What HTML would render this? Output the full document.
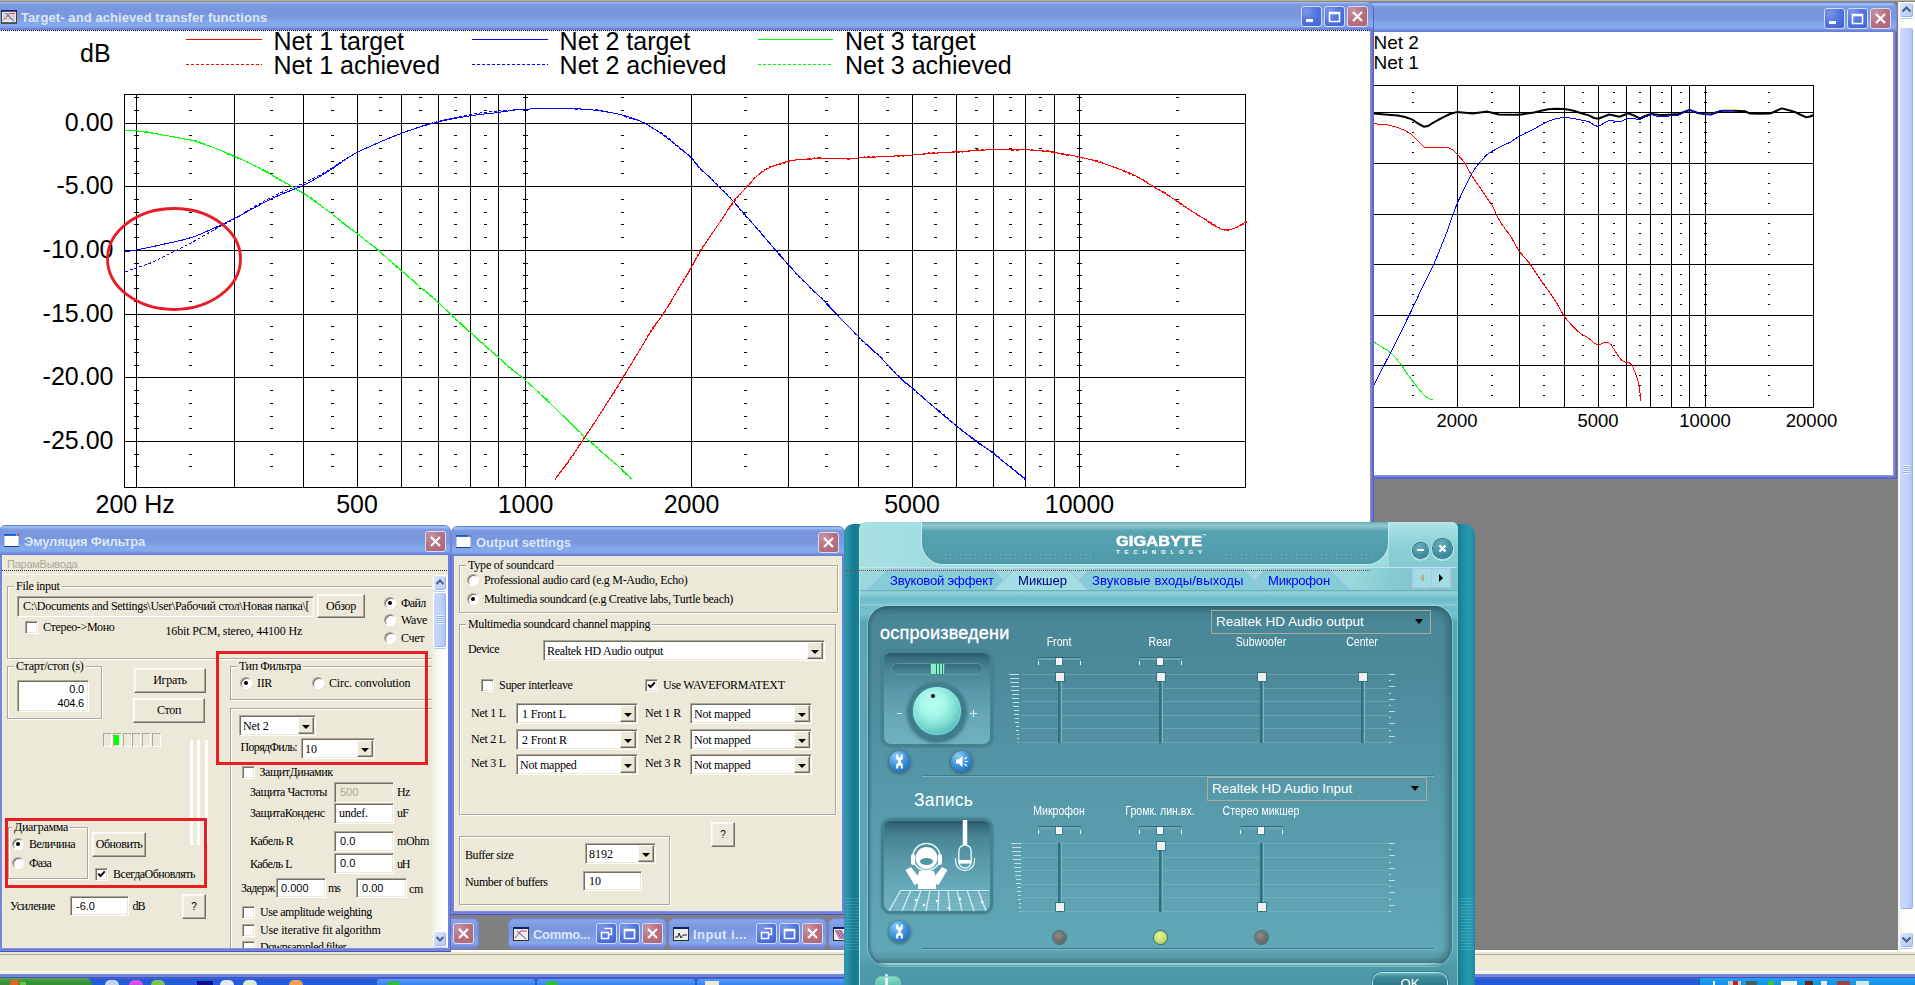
<!DOCTYPE html>
<html lang="ru">
<head>
<meta charset="utf-8">
<title>Target- and achieved transfer functions</title>
<style>
*{box-sizing:border-box;margin:0;padding:0}
html,body{width:1915px;height:985px;overflow:hidden;background:#808080}
body{position:relative;font-family:"Liberation Sans",sans-serif;font-size:11px;color:#000;line-height:1}
.a{position:absolute}
.ser{font-family:"Liberation Serif",serif;font-size:12px;white-space:nowrap;line-height:13px}
.san{font-family:"Liberation Sans",sans-serif;font-size:11px;white-space:nowrap;line-height:13px}
.q{font-size:10px}
/* window frames */
.win{position:absolute;background:#fff;border:1px solid #5560c4;border-top:0;box-shadow:inset 0 0 0 1px #6472d1,inset 0 0 0 2px #7180da,inset 0 0 0 3px #8696e4}
.tb{position:absolute;left:0;height:30px;border-radius:7px 7px 0 0;
 background:linear-gradient(180deg,#5f82e0 0,#5f82e0 1px,#9db9ee 1px,#9db9ee 3px,#8aa8ea 3.5px,#7f9ee4 4.5px,#7b98e0 5.5px,#7a96de 7px,#7a96de 17px,#7fa0e5 19.5px,#83a9ea 22px,#83a9ea 25.5px,#80a2e7 26.5px,#7b94e1 27.5px,#7086da 28.5px,#6c80d8 29.5px);
 box-shadow:inset 1px 0 0 #7887dc,inset -1px 0 0 #7887dc}
.tt{position:absolute;font-family:"Liberation Sans",sans-serif;font-weight:bold;font-size:13px;line-height:15px;color:#dce6f9;white-space:nowrap}
.cb{position:absolute;width:21px;height:21px;border-radius:3px;border:1px solid #d5dcf5;
 background:radial-gradient(circle at 25% 20%,#7c97ea 0,#5677e2 45%,#4a6ddc 70%,#3f62d2 100%)}
.cb.x{background:radial-gradient(circle at 25% 20%,#c692a8 0,#b8707e 50%,#b06472 100%)}
.cb svg{position:absolute;left:0;top:0;width:19px;height:19px}
/* classic controls */
.btn{position:absolute;background:#ece9d8;border:1px solid;border-color:#fff #716f64 #716f64 #fff;box-shadow:inset -1px -1px 0 #aca899,inset 1px 1px 0 #f6f5ee;text-align:center}
.fld{position:absolute;background:#fff;border:1px solid;border-color:#aca899 #fff #fff #aca899;box-shadow:inset 1px 1px 0 #716f64,inset -1px -1px 0 #ece9d8}
.grp{position:absolute;border:1px solid #aca899;box-shadow:1px 1px 0 #fff,inset 1px 1px 0 #fff}
.gl{position:absolute;background:#ece9d8;padding:0 2px}
.chk{position:absolute;width:13px;height:13px;background:#fff;border:1px solid;border-color:#aca899 #fff #fff #aca899;box-shadow:inset 1px 1px 0 #716f64,inset -1px -1px 0 #ece9d8}
.rad{position:absolute;width:12px;height:12px;border-radius:50%;background:#fff;border:1px solid;border-color:#aca899 #fff #fff #aca899;box-shadow:inset 1px 1px 0 #716f64}
.rad.on::after{content:"";position:absolute;left:3px;top:3px;width:4px;height:4px;border-radius:50%;background:#000}
.dd{position:absolute;right:1px;top:1px;bottom:1px;width:16px;background:#ece9d8;border:1px solid;border-color:#fff #716f64 #716f64 #fff;box-shadow:inset -1px -1px 0 #aca899}
.dd::after{content:"";position:absolute;left:3px;top:7px;border:4px solid transparent;border-top-color:#000;border-bottom:0}
</style>
</head>
<body>

<!-- MDI client top edge -->
<div class="a" style="left:0;top:0;width:1915px;height:1px;background:#b4b1a0"></div>
<div class="a" style="left:0;top:1px;width:1915px;height:1px;background:#8d8a7b"></div>

<!-- second chart window (Common mode / summed response) -->
<div class="win" style="left:1360px;top:2px;width:537px;height:477px;border-radius:8px 8px 0 0">
 <div class="tb" style="left:-1px;top:0;width:537px;height:30px"></div>
</div>
<svg class="a" style="left:1374px;top:32px" width="519" height="443" viewBox="1374 32 519 443" font-family="'Liberation Sans',sans-serif" font-size="18.5" fill="#000">
<g shape-rendering="crispEdges" stroke="#000" stroke-width="1" fill="none"><path d="M1373.5 85.5H1813.5V407.5H1373.5M1373.5 112.5H1813.5M1373.5 163.5H1813.5M1373.5 214.5H1813.5M1373.5 264.5H1813.5M1373.5 315.5H1813.5M1373.5 365.5H1813.5M1457.5 85.5V407.5M1519.5 85.5V407.5M1564.5 85.5V407.5M1598.5 85.5V407.5M1626.5 85.5V407.5M1650.5 85.5V407.5M1671.5 85.5V407.5M1689.5 85.5V407.5M1705.5 85.5V407.5"/><path d="M1411.5 92.5h2M1490.5 92.5h2M1542.5 92.5h2M1581.5 92.5h2M1612.5 92.5h2M1638.5 92.5h2M1660.5 92.5h2M1679.5 92.5h2M1767.5 92.5h2M1704.0 92.5h3M1411.5 102.5h2M1490.5 102.5h2M1542.5 102.5h2M1581.5 102.5h2M1612.5 102.5h2M1638.5 102.5h2M1660.5 102.5h2M1679.5 102.5h2M1767.5 102.5h2M1704.0 102.5h3M1411.5 122.5h2M1490.5 122.5h2M1542.5 122.5h2M1581.5 122.5h2M1612.5 122.5h2M1638.5 122.5h2M1660.5 122.5h2M1679.5 122.5h2M1767.5 122.5h2M1704.0 122.5h3M1411.5 132.5h2M1490.5 132.5h2M1542.5 132.5h2M1581.5 132.5h2M1612.5 132.5h2M1638.5 132.5h2M1660.5 132.5h2M1679.5 132.5h2M1767.5 132.5h2M1704.0 132.5h3M1411.5 142.5h2M1490.5 142.5h2M1542.5 142.5h2M1581.5 142.5h2M1612.5 142.5h2M1638.5 142.5h2M1660.5 142.5h2M1679.5 142.5h2M1767.5 142.5h2M1704.0 142.5h3M1411.5 152.5h2M1490.5 152.5h2M1542.5 152.5h2M1581.5 152.5h2M1612.5 152.5h2M1638.5 152.5h2M1660.5 152.5h2M1679.5 152.5h2M1767.5 152.5h2M1704.0 152.5h3M1411.5 173.5h2M1490.5 173.5h2M1542.5 173.5h2M1581.5 173.5h2M1612.5 173.5h2M1638.5 173.5h2M1660.5 173.5h2M1679.5 173.5h2M1767.5 173.5h2M1704.0 173.5h3M1411.5 183.5h2M1490.5 183.5h2M1542.5 183.5h2M1581.5 183.5h2M1612.5 183.5h2M1638.5 183.5h2M1660.5 183.5h2M1679.5 183.5h2M1767.5 183.5h2M1704.0 183.5h3M1411.5 193.5h2M1490.5 193.5h2M1542.5 193.5h2M1581.5 193.5h2M1612.5 193.5h2M1638.5 193.5h2M1660.5 193.5h2M1679.5 193.5h2M1767.5 193.5h2M1704.0 193.5h3M1411.5 203.5h2M1490.5 203.5h2M1542.5 203.5h2M1581.5 203.5h2M1612.5 203.5h2M1638.5 203.5h2M1660.5 203.5h2M1679.5 203.5h2M1767.5 203.5h2M1704.0 203.5h3M1411.5 223.5h2M1490.5 223.5h2M1542.5 223.5h2M1581.5 223.5h2M1612.5 223.5h2M1638.5 223.5h2M1660.5 223.5h2M1679.5 223.5h2M1767.5 223.5h2M1704.0 223.5h3M1411.5 233.5h2M1490.5 233.5h2M1542.5 233.5h2M1581.5 233.5h2M1612.5 233.5h2M1638.5 233.5h2M1660.5 233.5h2M1679.5 233.5h2M1767.5 233.5h2M1704.0 233.5h3M1411.5 244.5h2M1490.5 244.5h2M1542.5 244.5h2M1581.5 244.5h2M1612.5 244.5h2M1638.5 244.5h2M1660.5 244.5h2M1679.5 244.5h2M1767.5 244.5h2M1704.0 244.5h3M1411.5 254.5h2M1490.5 254.5h2M1542.5 254.5h2M1581.5 254.5h2M1612.5 254.5h2M1638.5 254.5h2M1660.5 254.5h2M1679.5 254.5h2M1767.5 254.5h2M1704.0 254.5h3M1411.5 274.5h2M1490.5 274.5h2M1542.5 274.5h2M1581.5 274.5h2M1612.5 274.5h2M1638.5 274.5h2M1660.5 274.5h2M1679.5 274.5h2M1767.5 274.5h2M1704.0 274.5h3M1411.5 284.5h2M1490.5 284.5h2M1542.5 284.5h2M1581.5 284.5h2M1612.5 284.5h2M1638.5 284.5h2M1660.5 284.5h2M1679.5 284.5h2M1767.5 284.5h2M1704.0 284.5h3M1411.5 294.5h2M1490.5 294.5h2M1542.5 294.5h2M1581.5 294.5h2M1612.5 294.5h2M1638.5 294.5h2M1660.5 294.5h2M1679.5 294.5h2M1767.5 294.5h2M1704.0 294.5h3M1411.5 304.5h2M1490.5 304.5h2M1542.5 304.5h2M1581.5 304.5h2M1612.5 304.5h2M1638.5 304.5h2M1660.5 304.5h2M1679.5 304.5h2M1767.5 304.5h2M1704.0 304.5h3M1411.5 325.5h2M1490.5 325.5h2M1542.5 325.5h2M1581.5 325.5h2M1612.5 325.5h2M1638.5 325.5h2M1660.5 325.5h2M1679.5 325.5h2M1767.5 325.5h2M1704.0 325.5h3M1411.5 335.5h2M1490.5 335.5h2M1542.5 335.5h2M1581.5 335.5h2M1612.5 335.5h2M1638.5 335.5h2M1660.5 335.5h2M1679.5 335.5h2M1767.5 335.5h2M1704.0 335.5h3M1411.5 345.5h2M1490.5 345.5h2M1542.5 345.5h2M1581.5 345.5h2M1612.5 345.5h2M1638.5 345.5h2M1660.5 345.5h2M1679.5 345.5h2M1767.5 345.5h2M1704.0 345.5h3M1411.5 355.5h2M1490.5 355.5h2M1542.5 355.5h2M1581.5 355.5h2M1612.5 355.5h2M1638.5 355.5h2M1660.5 355.5h2M1679.5 355.5h2M1767.5 355.5h2M1704.0 355.5h3M1411.5 375.5h2M1490.5 375.5h2M1542.5 375.5h2M1581.5 375.5h2M1612.5 375.5h2M1638.5 375.5h2M1660.5 375.5h2M1679.5 375.5h2M1767.5 375.5h2M1704.0 375.5h3M1411.5 385.5h2M1490.5 385.5h2M1542.5 385.5h2M1581.5 385.5h2M1612.5 385.5h2M1638.5 385.5h2M1660.5 385.5h2M1679.5 385.5h2M1767.5 385.5h2M1704.0 385.5h3M1411.5 395.5h2M1490.5 395.5h2M1542.5 395.5h2M1581.5 395.5h2M1612.5 395.5h2M1638.5 395.5h2M1660.5 395.5h2M1679.5 395.5h2M1767.5 395.5h2M1704.0 395.5h3"/></g>
<polyline points="1374,113.6 1385,114.5 1397.7,115.4 1405,117 1412,119.4 1418,123.5 1423.8,126.7 1428,126 1432.5,123.2 1438,120 1444,116.8 1450,114 1457.4,111.9 1465,112.8 1473,113.6 1480,112.5 1487.5,111.6 1493,113 1499,114.5 1510,114.8 1519.4,114.8 1527,113.5 1534,112.5 1541,110.8 1548.4,109.3 1556,108.8 1564.3,109 1569,109.8 1574.5,111 1582,113.5 1589,115.4 1594,118 1598.3,118.8 1604,116.5 1609.3,114.5 1614,115.5 1619.4,116.8 1624,115 1628,113.3 1634,115.5 1639.7,118.3 1645,116 1651.3,113.9 1658,114.8 1664.3,115 1672,114.5 1678.8,113.9 1684,112 1689.6,110 1694,111.5 1697.7,113 1704,114 1710.7,114.5 1716,112.5 1722.3,110.7 1734,110.8 1745.5,111.3 1749.9,113.6 1760,113.8 1770,113.6 1776,111 1781.7,108.4 1788,110 1794.8,111.9 1800,114.5 1806.4,117.4 1810,116.5 1813.6,115" fill="none" stroke="#000" stroke-width="2" stroke-linejoin="round"/>
<polyline points="1374,123.8 1386,124.6 1397.7,127.5 1405,130.5 1412,134.8 1418,141 1424.3,147.2 1435,147.2 1447,147.2 1452.8,150 1458,155 1464.3,162.3 1471.6,175.4 1476,182 1481.7,189.9 1487,198 1493.3,207.2 1497,216 1502,224.6 1506,230 1510.7,236.2 1515,244 1519.4,251.6 1524,257 1529.6,263.2 1536,273 1542.6,283 1550,293 1557,303.6 1564.3,316.7 1572,325.5 1580.3,333.5 1585,336 1589,338.4 1594,343 1598.3,345 1603,343 1607.8,342.2 1611,344.5 1613.6,348.6 1617,354 1620.9,359.6 1625,362 1629.6,363 1633,367 1635.4,373.2 1638,381 1639.7,389 1640.6,400.7" fill="none" stroke="#ff0000" stroke-width="1" shape-rendering="crispEdges"/>
<polyline points="1374,342 1381,346.5 1389,351.4 1395,357 1400.6,364 1406,372 1412,380.4 1418,388 1423.8,395 1428,398 1432.5,400" fill="none" stroke="#00ff00" stroke-width="1" shape-rendering="crispEdges"/>
<polyline points="1374,384.8 1381,371 1389,355.8 1400,334 1412,309.4 1422,288 1432.5,267.4 1439.7,250 1447,231.9 1452,217 1457.4,203 1464,189 1471.6,174 1476,167 1481.7,160.3 1486,155.5 1490.4,152.2 1500,147 1510.7,142 1515,139 1519.4,136.2 1526,132.8 1534,129 1541,125 1548.4,121.2 1556,118.6 1564.3,117.4 1569,117.8 1574.5,118.8 1582,120.2 1589,121.7 1594,125 1598.3,126.7 1604,123 1609.3,120.3 1614,121 1619.4,122 1624,120 1628,118.3 1634,118.6 1639.7,119.7 1645,117 1651.3,114.5 1658,116.5 1664.3,116.8 1672,115.5 1678.8,115 1684,112.5 1689.6,110 1694,111.5 1697.7,113 1704,114 1710.7,114 1716,112 1722.3,110 1734,110" fill="none" stroke="#0000ff" stroke-width="1" shape-rendering="crispEdges"/>
<text x="1373.5" y="48.5" font-size="19">Net 2</text>
<text x="1373.5" y="68.5" font-size="19">Net 1</text>
<text x="1457" y="427" text-anchor="middle">2000</text>
<text x="1598" y="427" text-anchor="middle">5000</text>
<text x="1705" y="427" text-anchor="middle">10000</text>
<text x="1811.5" y="427" text-anchor="middle">20000</text>
</svg>
<div class="cb" style="left:1824px;top:8px"><svg viewBox="0 0 19 19"><rect x="4" y="12" width="7" height="3" fill="#fff"/></svg></div>
<div class="cb" style="left:1847px;top:8px"><svg viewBox="0 0 19 19"><path d="M4.5 5.5h10v9h-10z M4.5 6.5h10" fill="none" stroke="#fff" stroke-width="1.6"/></svg></div>
<div class="cb x" style="left:1870px;top:8px"><svg viewBox="0 0 19 19"><path d="M5 5l9 9M14 5l-9 9" stroke="#fff" stroke-width="2.2" fill="none"/></svg></div>

<!-- main chart window -->
<div class="win" style="left:-5px;top:2px;width:1379px;height:910px;border-radius:0 8px 0 0;overflow:hidden">
 <div class="tb" style="left:-1px;top:-2px;width:1379px;height:30px;border-radius:0 8px 0 0"></div>
</div>
<div class="a" style="left:0;top:30px;width:1370px;height:1px;background:repeating-linear-gradient(90deg,#e4eafb 0 1px,#000 1px 2px)"></div>
<div class="a" style="left:1370px;top:31px;width:1px;height:495px;background:repeating-linear-gradient(180deg,#a08020 0 1px,#8c9ce6 1px 2px)"></div>
<svg class="a" style="left:1px;top:10px" width="16" height="14" viewBox="0 0 16 16" preserveAspectRatio="none"><rect x=".5" y=".5" width="15" height="14" fill="#e8e8e8" stroke="#404040"/><rect x="0" y="0" width="16" height="2" fill="#0a246a"/><path d="M2 4h12M2 7h12M2 10h12" stroke="#b0b0b0"/><path d="M2 12L9 4h5" stroke="#e03030" fill="none"/><path d="M5 4l8 9" stroke="#3030e0" fill="none"/><path d="M0 15.5h16" stroke="#404040"/></svg>
<div class="tt" style="left:21px;top:10px;letter-spacing:.08px">Target- and achieved transfer functions</div>
<div class="cb" style="left:1301px;top:6px"><svg viewBox="0 0 19 19"><rect x="4" y="12" width="7" height="3" fill="#fff"/></svg></div>
<div class="cb" style="left:1324px;top:6px"><svg viewBox="0 0 19 19"><path d="M4.5 5.5h10v9h-10z M4.5 6.5h10" fill="none" stroke="#fff" stroke-width="1.6"/></svg></div>
<div class="cb x" style="left:1347px;top:6px"><svg viewBox="0 0 19 19"><path d="M5 5l9 9M14 5l-9 9" stroke="#fff" stroke-width="2.2" fill="none"/></svg></div>
<svg class="a" style="left:0;top:31px" width="1370" height="500" viewBox="0 31 1370 500" font-family="'Liberation Sans',sans-serif" font-size="25" fill="#000">
<g shape-rendering="crispEdges" stroke="#000" stroke-width="1" fill="none"><rect x="124.5" y="94.5" width="1121.0" height="393.0"/><path d="M124.5 123.5H1245.5M124.5 186.5H1245.5M124.5 250.5H1245.5M124.5 314.5H1245.5M124.5 377.5H1245.5M124.5 441.5H1245.5M234.5 94.5V487.5M303.5 94.5V487.5M357.5 94.5V487.5M401.5 94.5V487.5M438.5 94.5V487.5M470.5 94.5V487.5M498.5 94.5V487.5M691.5 94.5V487.5M788.5 94.5V487.5M858.5 94.5V487.5M912.5 94.5V487.5M956.5 94.5V487.5M993.5 94.5V487.5M1025.5 94.5V487.5M1054.5 94.5V487.5M136.5 94.5V487.5M525.5 94.5V487.5M1079.5 94.5V487.5"/><path d="M189.0 97.5h3M270.0 97.5h3M331.0 97.5h3M379.0 97.5h3M419.0 97.5h3M454.0 97.5h3M484.0 97.5h3M621.0 97.5h3M744.0 97.5h3M825.0 97.5h3M886.0 97.5h3M934.0 97.5h3M975.0 97.5h3M1009.0 97.5h3M1039.0 97.5h3M1176.0 97.5h3M134.0 97.5h5M523.0 97.5h5M1077.0 97.5h5M189.0 110.5h3M270.0 110.5h3M331.0 110.5h3M379.0 110.5h3M419.0 110.5h3M454.0 110.5h3M484.0 110.5h3M621.0 110.5h3M744.0 110.5h3M825.0 110.5h3M886.0 110.5h3M934.0 110.5h3M975.0 110.5h3M1009.0 110.5h3M1039.0 110.5h3M1176.0 110.5h3M134.0 110.5h5M523.0 110.5h5M1077.0 110.5h5M189.0 135.5h3M270.0 135.5h3M331.0 135.5h3M379.0 135.5h3M419.0 135.5h3M454.0 135.5h3M484.0 135.5h3M621.0 135.5h3M744.0 135.5h3M825.0 135.5h3M886.0 135.5h3M934.0 135.5h3M975.0 135.5h3M1009.0 135.5h3M1039.0 135.5h3M1176.0 135.5h3M134.0 135.5h5M523.0 135.5h5M1077.0 135.5h5M189.0 148.5h3M270.0 148.5h3M331.0 148.5h3M379.0 148.5h3M419.0 148.5h3M454.0 148.5h3M484.0 148.5h3M621.0 148.5h3M744.0 148.5h3M825.0 148.5h3M886.0 148.5h3M934.0 148.5h3M975.0 148.5h3M1009.0 148.5h3M1039.0 148.5h3M1176.0 148.5h3M134.0 148.5h5M523.0 148.5h5M1077.0 148.5h5M189.0 161.5h3M270.0 161.5h3M331.0 161.5h3M379.0 161.5h3M419.0 161.5h3M454.0 161.5h3M484.0 161.5h3M621.0 161.5h3M744.0 161.5h3M825.0 161.5h3M886.0 161.5h3M934.0 161.5h3M975.0 161.5h3M1009.0 161.5h3M1039.0 161.5h3M1176.0 161.5h3M134.0 161.5h5M523.0 161.5h5M1077.0 161.5h5M189.0 173.5h3M270.0 173.5h3M331.0 173.5h3M379.0 173.5h3M419.0 173.5h3M454.0 173.5h3M484.0 173.5h3M621.0 173.5h3M744.0 173.5h3M825.0 173.5h3M886.0 173.5h3M934.0 173.5h3M975.0 173.5h3M1009.0 173.5h3M1039.0 173.5h3M1176.0 173.5h3M134.0 173.5h5M523.0 173.5h5M1077.0 173.5h5M189.0 199.5h3M270.0 199.5h3M331.0 199.5h3M379.0 199.5h3M419.0 199.5h3M454.0 199.5h3M484.0 199.5h3M621.0 199.5h3M744.0 199.5h3M825.0 199.5h3M886.0 199.5h3M934.0 199.5h3M975.0 199.5h3M1009.0 199.5h3M1039.0 199.5h3M1176.0 199.5h3M134.0 199.5h5M523.0 199.5h5M1077.0 199.5h5M189.0 212.5h3M270.0 212.5h3M331.0 212.5h3M379.0 212.5h3M419.0 212.5h3M454.0 212.5h3M484.0 212.5h3M621.0 212.5h3M744.0 212.5h3M825.0 212.5h3M886.0 212.5h3M934.0 212.5h3M975.0 212.5h3M1009.0 212.5h3M1039.0 212.5h3M1176.0 212.5h3M134.0 212.5h5M523.0 212.5h5M1077.0 212.5h5M189.0 224.5h3M270.0 224.5h3M331.0 224.5h3M379.0 224.5h3M419.0 224.5h3M454.0 224.5h3M484.0 224.5h3M621.0 224.5h3M744.0 224.5h3M825.0 224.5h3M886.0 224.5h3M934.0 224.5h3M975.0 224.5h3M1009.0 224.5h3M1039.0 224.5h3M1176.0 224.5h3M134.0 224.5h5M523.0 224.5h5M1077.0 224.5h5M189.0 237.5h3M270.0 237.5h3M331.0 237.5h3M379.0 237.5h3M419.0 237.5h3M454.0 237.5h3M484.0 237.5h3M621.0 237.5h3M744.0 237.5h3M825.0 237.5h3M886.0 237.5h3M934.0 237.5h3M975.0 237.5h3M1009.0 237.5h3M1039.0 237.5h3M1176.0 237.5h3M134.0 237.5h5M523.0 237.5h5M1077.0 237.5h5M189.0 263.5h3M270.0 263.5h3M331.0 263.5h3M379.0 263.5h3M419.0 263.5h3M454.0 263.5h3M484.0 263.5h3M621.0 263.5h3M744.0 263.5h3M825.0 263.5h3M886.0 263.5h3M934.0 263.5h3M975.0 263.5h3M1009.0 263.5h3M1039.0 263.5h3M1176.0 263.5h3M134.0 263.5h5M523.0 263.5h5M1077.0 263.5h5M189.0 275.5h3M270.0 275.5h3M331.0 275.5h3M379.0 275.5h3M419.0 275.5h3M454.0 275.5h3M484.0 275.5h3M621.0 275.5h3M744.0 275.5h3M825.0 275.5h3M886.0 275.5h3M934.0 275.5h3M975.0 275.5h3M1009.0 275.5h3M1039.0 275.5h3M1176.0 275.5h3M134.0 275.5h5M523.0 275.5h5M1077.0 275.5h5M189.0 288.5h3M270.0 288.5h3M331.0 288.5h3M379.0 288.5h3M419.0 288.5h3M454.0 288.5h3M484.0 288.5h3M621.0 288.5h3M744.0 288.5h3M825.0 288.5h3M886.0 288.5h3M934.0 288.5h3M975.0 288.5h3M1009.0 288.5h3M1039.0 288.5h3M1176.0 288.5h3M134.0 288.5h5M523.0 288.5h5M1077.0 288.5h5M189.0 301.5h3M270.0 301.5h3M331.0 301.5h3M379.0 301.5h3M419.0 301.5h3M454.0 301.5h3M484.0 301.5h3M621.0 301.5h3M744.0 301.5h3M825.0 301.5h3M886.0 301.5h3M934.0 301.5h3M975.0 301.5h3M1009.0 301.5h3M1039.0 301.5h3M1176.0 301.5h3M134.0 301.5h5M523.0 301.5h5M1077.0 301.5h5M189.0 326.5h3M270.0 326.5h3M331.0 326.5h3M379.0 326.5h3M419.0 326.5h3M454.0 326.5h3M484.0 326.5h3M621.0 326.5h3M744.0 326.5h3M825.0 326.5h3M886.0 326.5h3M934.0 326.5h3M975.0 326.5h3M1009.0 326.5h3M1039.0 326.5h3M1176.0 326.5h3M134.0 326.5h5M523.0 326.5h5M1077.0 326.5h5M189.0 339.5h3M270.0 339.5h3M331.0 339.5h3M379.0 339.5h3M419.0 339.5h3M454.0 339.5h3M484.0 339.5h3M621.0 339.5h3M744.0 339.5h3M825.0 339.5h3M886.0 339.5h3M934.0 339.5h3M975.0 339.5h3M1009.0 339.5h3M1039.0 339.5h3M1176.0 339.5h3M134.0 339.5h5M523.0 339.5h5M1077.0 339.5h5M189.0 352.5h3M270.0 352.5h3M331.0 352.5h3M379.0 352.5h3M419.0 352.5h3M454.0 352.5h3M484.0 352.5h3M621.0 352.5h3M744.0 352.5h3M825.0 352.5h3M886.0 352.5h3M934.0 352.5h3M975.0 352.5h3M1009.0 352.5h3M1039.0 352.5h3M1176.0 352.5h3M134.0 352.5h5M523.0 352.5h5M1077.0 352.5h5M189.0 365.5h3M270.0 365.5h3M331.0 365.5h3M379.0 365.5h3M419.0 365.5h3M454.0 365.5h3M484.0 365.5h3M621.0 365.5h3M744.0 365.5h3M825.0 365.5h3M886.0 365.5h3M934.0 365.5h3M975.0 365.5h3M1009.0 365.5h3M1039.0 365.5h3M1176.0 365.5h3M134.0 365.5h5M523.0 365.5h5M1077.0 365.5h5M189.0 390.5h3M270.0 390.5h3M331.0 390.5h3M379.0 390.5h3M419.0 390.5h3M454.0 390.5h3M484.0 390.5h3M621.0 390.5h3M744.0 390.5h3M825.0 390.5h3M886.0 390.5h3M934.0 390.5h3M975.0 390.5h3M1009.0 390.5h3M1039.0 390.5h3M1176.0 390.5h3M134.0 390.5h5M523.0 390.5h5M1077.0 390.5h5M189.0 403.5h3M270.0 403.5h3M331.0 403.5h3M379.0 403.5h3M419.0 403.5h3M454.0 403.5h3M484.0 403.5h3M621.0 403.5h3M744.0 403.5h3M825.0 403.5h3M886.0 403.5h3M934.0 403.5h3M975.0 403.5h3M1009.0 403.5h3M1039.0 403.5h3M1176.0 403.5h3M134.0 403.5h5M523.0 403.5h5M1077.0 403.5h5M189.0 416.5h3M270.0 416.5h3M331.0 416.5h3M379.0 416.5h3M419.0 416.5h3M454.0 416.5h3M484.0 416.5h3M621.0 416.5h3M744.0 416.5h3M825.0 416.5h3M886.0 416.5h3M934.0 416.5h3M975.0 416.5h3M1009.0 416.5h3M1039.0 416.5h3M1176.0 416.5h3M134.0 416.5h5M523.0 416.5h5M1077.0 416.5h5M189.0 428.5h3M270.0 428.5h3M331.0 428.5h3M379.0 428.5h3M419.0 428.5h3M454.0 428.5h3M484.0 428.5h3M621.0 428.5h3M744.0 428.5h3M825.0 428.5h3M886.0 428.5h3M934.0 428.5h3M975.0 428.5h3M1009.0 428.5h3M1039.0 428.5h3M1176.0 428.5h3M134.0 428.5h5M523.0 428.5h5M1077.0 428.5h5M189.0 454.5h3M270.0 454.5h3M331.0 454.5h3M379.0 454.5h3M419.0 454.5h3M454.0 454.5h3M484.0 454.5h3M621.0 454.5h3M744.0 454.5h3M825.0 454.5h3M886.0 454.5h3M934.0 454.5h3M975.0 454.5h3M1009.0 454.5h3M1039.0 454.5h3M1176.0 454.5h3M134.0 454.5h5M523.0 454.5h5M1077.0 454.5h5M189.0 466.5h3M270.0 466.5h3M331.0 466.5h3M379.0 466.5h3M419.0 466.5h3M454.0 466.5h3M484.0 466.5h3M621.0 466.5h3M744.0 466.5h3M825.0 466.5h3M886.0 466.5h3M934.0 466.5h3M975.0 466.5h3M1009.0 466.5h3M1039.0 466.5h3M1176.0 466.5h3M134.0 466.5h5M523.0 466.5h5M1077.0 466.5h5"/></g>
<polyline points="125,130.1 126.7,130.1 129,130.1 132.1,130.4 136,130.9 140.9,131.2 146.8,131.3 153.3,132.6 160,134.8 167.3,136.1 175.1,137.4 182.9,139.3 190,139.9 196.1,140.7 201.5,142.6 206.7,144.8 212,146.8 217.6,148.8 223.2,151.6 228.8,154.8 234,156.9 238.8,158.4 243.2,160 247.5,162 252,164.4 256.8,166.6 261.6,168.6 266.4,171.1 271,174.2 275.2,177.3 279.2,179.8 283.1,181.9 287,183.8 291,186.1 295.1,188.7 299.1,191.2 303,193.3 306.6,195.1 310.1,197 313.5,199.4 317,202.2 320.8,205.4 324.6,208.5 328.4,211.3 332,213.9 335.2,216.4 338.1,219 341,221.7 344,224.5 346.9,226.9 349.8,228.8 353,230.8 357,233.2 362.1,237 368,242 374.2,246.7 380,251.2 385.4,256.2 390.7,261.7 395.9,266.5 401,270.5 406.1,274.6 411.1,279.2 416,283.7 420.7,287.3 425.2,290.5 429.6,294.1 433.8,298.2 438,302.5 442.1,306.4 446.1,309.9 450,313.4 454,317.3 458,321.5 462.1,325.6 466.1,329.1 470,332 473.6,334.9 477.1,337.9 480.5,341.3 484,344.6 487.5,347.8 491.1,350.7 494.6,353.4 498,356.4 501.3,359.7 504.5,363.1 507.7,366.5 511,369.6 514.2,372 517.3,374 520.9,376.5 525.6,380.5 531.9,386.4 539.3,392.5 547.3,399.7 555,408.3 562.7,415.8 570.6,423.5 578.3,431.4 585,437 590.5,441.3 595.2,445.5 599.5,449.7 604,453.8 608.9,457.9 613.8,462.1 618.5,466.7 622.5,470.8 625.7,474.1 628.4,476.5 630.5,478.4 632,479.6" fill="none" stroke="#00ff00" stroke-width="1" stroke-dasharray="3 2" shape-rendering="crispEdges"/>
<polyline points="555,479.5 557.7,475.8 561.6,470.7 565.9,465.2 570,459.8 573.7,454.4 577.2,448.5 581,442.4 585,436 589.5,429.5 594.3,422.8 599.2,415.3 604,407.7 608.7,400.4 613.5,393.4 618.1,386.3 622.5,378.8 626.7,371.5 630.7,364.6 634.4,358.4 638,352.8 641.2,347.5 644,342.5 646.9,337.4 650,332.1 653.5,326.8 657.3,321.8 661.2,317 665,311.7 668.8,305.6 672.8,298.7 676.5,292.1 680,286.3 683.1,281.4 685.9,277 688.5,272.6 691,268.2 693.3,263.7 695.5,259.3 697.7,255.1 700,250.9 702.6,246.8 705.4,242.8 708.2,238.9 711,235 713.8,231.1 716.5,227.1 719.2,223 722,219 724.8,214.8 727.8,210.5 730.5,206.5 733,203.1 735,200.4 736.7,198.4 738.3,196.5 740,194.5 741.9,192.2 743.8,190 745.7,187.8 747.5,185.8 749.2,183.9 750.8,182 752.4,180.2 754,178.6 755.5,177.2 756.9,175.9 758.4,174.6 760,173.3 761.8,171.8 763.8,170.4 765.8,169 768,167.7 770.3,166.7 772.8,166 775.4,165.5 778,165.1 780.6,164.4 783.2,163.6 785.8,162.6 788.5,161.6 791.1,160.8 793.7,160.2 796.5,159.9 800,159.8 804.4,159.5 809.5,158.7 814.8,157.9 820,157.9 825,158.6 830.1,158.9 835.1,158.6 840,158.5 844.6,158.8 848.9,159.2 853.4,158.9 858.6,157.8 864.6,156.9 871.3,156.9 878.1,156.6 885,156 891.9,156.5 898.9,156.8 905.9,155.7 912.4,154.9 918.4,154.6 924.1,153.8 929.5,152.6 935,152.3 940.3,152.8 945.4,153 950.7,152.5 956.6,152 963.3,152 970.5,151.2 977.9,149.5 985,149.3 991.8,149.6 998.4,149.1 1004.8,149.3 1010.7,150.1 1015.9,150.3 1020.5,149.8 1025,149.5 1030,149.7 1035.6,150.3 1041.6,150.4 1047.8,150.6 1054,152.1 1060.5,154.1 1067.1,155.1 1073.7,156 1079.8,157.6 1085.4,158.6 1090.6,159.2 1095.4,160.1 1100,161.7 1104.1,163.5 1107.8,165 1111.3,166.2 1115,167.4 1119,169 1123.2,171 1127.3,173.1 1131,174.6 1134.1,175.8 1136.8,176.7 1139.4,177.8 1142,179 1144.7,180.6 1147.4,182.4 1150.2,184.3 1153,186.1 1155.9,187.8 1158.9,189.3 1162,190.9 1165,192.7 1168,194.9 1170.9,197.3 1173.9,199.7 1177,201.9 1180.1,204 1183.4,206 1186.6,208 1190,210.2 1193.6,212.6 1197.5,215 1201.2,217.1 1204.4,218.7 1206.9,220 1209,221.3 1210.9,222.6 1213,223.9 1215.4,225.5 1217.9,227.1 1220.4,228.6 1222.7,229.7 1224.7,230.2 1226.5,230.3 1228.2,230.1 1230,229.7 1232,229.1 1234,228.4 1236,227.7 1238,226.9 1240,226 1242.1,225 1244,223.9 1245.4,223 1246.2,222.4 1246.7,222.2 1246.8,222 1247,221.9" fill="none" stroke="#ff0000" stroke-width="1" stroke-dasharray="3 2" shape-rendering="crispEdges"/>
<polyline points="565,108.7 568.6,108.7 573.8,109 579.6,109.8 585,110 589.8,109.6 594.6,109.4 599.3,110 604,111.1 608.6,112 613.1,112.6 617.5,113.5 622,115.1 626.6,117.1 631.2,118.8 635.7,119.9 640,121 644,122.7 647.7,124.9 651.3,127.1 655,129.3 658.9,131.3 662.8,133.7 666.6,136.6 670,139.6 672.8,142.3 675.2,144.6 677.5,146.6 680,148.7 682.7,150.7 685.6,152.9 688.4,155.3 691,157.9 693.2,160.5 695.2,163 697.3,165.7 700,168.6 703.5,171.7 707.5,175 711.8,178.8 716,183.2 719.9,187.5 723.8,191.5 728,195.6 733,200.8 739,208.1 745.8,216.6 752.9,224.1 760,231.6 766.9,239.9 774,247.9 781.1,255.9 788.5,265.3 796.6,274.3 805.2,282.4 813.3,290.8 820,296.8 824.3,300.6 827.1,303.3 829.6,306.1 833.4,310.4 838.9,316.7 845.3,323.3 852.1,330.3 858.6,337.6 865,343.7 871.4,348.6 877.5,354 883,359.7 887.7,364.5 891.7,368.7 895.4,372.6 899,376.5 902.3,380 905.3,382.9 908.5,385.7 912.4,388.9 917.4,392.8 923.2,397.6 929.2,403.2 935,407.8 940.5,411.8 946.1,416.4 951.4,421.6 956.6,426.4 961.4,430.1 966,433.5 970.5,437.1 975,440.9 979.7,444.2 984.4,446.9 989,449.5 993.5,452.8 997.8,456.5 1001.9,460.2 1006,463.4 1010,466.5 1014.3,470 1018.9,474.2 1022.9,477.8 1025.7,480.1" fill="none" stroke="#0000ff" stroke-width="1" stroke-dasharray="3 2" shape-rendering="crispEdges"/>
<polyline points="125,130 126.7,130.1 129,130.2 132.1,130.4 136,130.8 140.9,131.5 146.8,132.4 153.3,133.4 160,134.5 167.3,135.7 175.1,137 182.9,138.5 190,140 196.1,141.6 201.5,143.3 206.7,145.1 212,147 217.6,149.1 223.2,151.4 228.8,153.7 234,156 238.8,158.1 243.2,160.2 247.5,162.3 252,164.5 256.8,166.9 261.6,169.5 266.4,172 271,174.5 275.2,176.8 279.2,179 283.1,181.2 287,183.5 291,185.8 295.1,188.2 299.1,190.6 303,193 306.6,195.4 310.1,197.9 313.5,200.4 317,203 320.8,205.7 324.6,208.5 328.4,211.3 332,214 335.2,216.5 338.1,218.8 341,221.1 344,223.5 346.9,225.8 349.8,227.9 353,230.4 357,233.5 362.1,237.5 368,242.2 374.2,247.2 380,252 385.4,256.5 390.7,261.1 395.9,265.5 401,270 406.1,274.5 411.1,278.9 416,283.3 420.7,287.5 425.2,291.4 429.6,295.2 433.8,298.8 438,302.5 442.1,306.1 446.1,309.8 450,313.4 454,317 458,320.8 462.1,324.6 466.1,328.4 470,332 473.6,335.4 477.1,338.7 480.5,341.9 484,345 487.5,348.1 491.1,351.1 494.6,354.1 498,357 501.3,359.9 504.5,362.8 507.7,365.6 511,368.5 514.2,371.1 517.3,373.5 520.9,376.4 525.6,380.5 531.9,386.2 539.3,393.2 547.3,400.7 555,408 562.7,415.4 570.6,423.2 578.3,430.6 585,437 590.5,442.1 595.2,446.3 599.5,450.1 604,454 608.9,458.2 613.8,462.5 618.5,466.5 622.5,470 625.7,473 628.4,475.5 630.5,477.5 632,479" fill="none" stroke="#00ff00" stroke-width="1" shape-rendering="crispEdges"/>
<polyline points="125,272 127,271.3 129.8,270.2 132.9,269.1 136,268 138.9,267 141.9,266.1 144.9,265.1 148,264 151.2,262.7 154.4,261.2 157.7,259.6 161,258 164.4,256.3 167.9,254.6 171.4,252.8 175,251 178.7,249.2 182.4,247.3 186.2,245.5 190,243.5 193.8,241.4 197.5,239.3 201.2,237.1 205,235 208.8,232.8 212.6,230.7 216.3,228.5 220,226.5 223.5,224.8 226.8,223.2 230.2,221.5 234,219.5 238.2,216.9 242.7,214 247.3,210.9 252,208 256.8,205.2 261.6,202.5 266.4,199.9 271,197.5 275.2,195.4 279.2,193.5 283.1,191.7 287,190 291,188.3 295.1,186.7 299.1,185.1 303,183.5 306.6,181.8 310.1,180.1 313.5,178.4 317,176.5 320.8,174.5 324.6,172.3 328.4,170.1 332,168 335.2,166 338.1,163.9 341,162 344,160 346.9,158.2 349.8,156.4 353,154.6 357,152.5 362.1,150 368,147.3 374.2,144.6 380,142 385.4,139.7 390.8,137.5 395.9,135.5 401,133.5 405.9,131.6 410.7,129.8 415.4,128.1 420,126.5 424.6,125.1 429.1,123.8 433.6,122.6 438,121.5 442.4,120.4 446.7,119.4 450.9,118.4 455,117.5 458.9,116.7 462.7,115.9 466.4,115.2 470,114.5 473.6,113.9 477.1,113.4 480.5,112.9 484,112.5 487.5,112.1 491.1,111.7 494.6,111.3 498,111 501.3,110.7 504.5,110.5 507.7,110.2 511,110 514.3,109.8 517.6,109.7 521.1,109.5 525,109.3 530,109 535.9,108.8 541.3,108.5 545,108.3" fill="none" stroke="#0000ff" stroke-width="1" stroke-dasharray="3 2" shape-rendering="crispEdges"/>
<polyline points="125,251.8 126.7,251.6 129,251.2 132.1,250.7 136,250 140.9,249 146.8,247.8 153.3,246.5 160,245 167.3,243.4 175.1,241.8 182.9,239.9 190,238 196.1,235.9 201.5,233.7 206.7,231.4 212,229 217.6,226.5 223.2,223.8 228.8,221.2 234,218.6 238.8,216.2 243.2,213.8 247.5,211.4 252,209 256.8,206.5 261.6,203.8 266.4,201.3 271,199 275.2,197 279.2,195.3 283.1,193.6 287,192 291,190.4 295.1,188.8 299.1,187.2 303,185.5 306.6,183.7 310.1,181.9 313.5,180 317,178 320.8,175.8 324.6,173.6 328.4,171.2 332,169 335.2,166.8 338.1,164.7 341,162.6 344,160.5 346.9,158.5 349.8,156.6 353,154.7 357,152.5 362.1,150 368,147.3 374.2,144.5 380,142 385.4,139.7 390.8,137.5 395.9,135.4 401,133.5 405.9,131.7 410.7,130 415.4,128.5 420,127 424.6,125.6 429.1,124.3 433.6,123.1 438,122 442.4,121 446.7,120.1 450.9,119.3 455,118.5 458.9,117.7 462.7,117 466.4,116.4 470,115.8 473.6,115.3 477.1,114.8 480.5,114.4 484,114 487.5,113.6 491.1,113.3 494.6,112.9 498,112.5 501.3,112 504.5,111.5 507.7,111 511,110.5 514.3,110.1 517.6,109.8 521.1,109.6 525,109.3 529.6,109 534.6,108.7 539.9,108.5 545,108.3 550,108.2 555,108.2 560,108.2 565,108.3 570,108.5 575.1,108.7 580.1,108.9 585,109.3 589.8,109.7 594.6,110.2 599.3,110.8 604,111.5 608.6,112.2 613.1,113 617.5,113.9 622,115 626.6,116.3 631.2,117.7 635.7,119.3 640,121 644,122.9 647.7,125 651.3,127.2 655,129.5 658.9,132 662.8,134.8 666.6,137.5 670,140 672.8,142.1 675.2,144.1 677.5,146 680,148 682.7,150.2 685.6,152.6 688.4,155 691,157.5 693.2,159.9 695.2,162.3 697.3,165 700,168 703.5,171.6 707.5,175.6 711.8,179.8 716,184 719.9,187.9 723.8,191.6 728,195.7 733,201 739,207.7 745.8,215.5 752.9,223.8 760,232 766.9,240.1 774,248.4 781.1,256.8 788.5,265 796.6,273.5 805.2,282.2 813.3,290.3 820,297 824.3,301.5 827.1,304.4 829.6,307.1 833.4,311 838.9,316.7 845.3,323.3 852.1,330.2 858.6,336.7 865,342.8 871.4,348.9 877.5,354.7 883,360 887.7,364.8 891.7,369.3 895.4,373.3 899,377 902.3,380 905.3,382.3 908.5,384.8 912.4,388 917.4,392.4 923.2,397.6 929.2,402.9 935,408 940.5,412.7 946.1,417.4 951.4,421.8 956.6,426 961.4,429.8 966,433.3 970.5,436.6 975,440 979.7,443.4 984.4,446.8 989,450.2 993.5,453.6 997.8,457 1001.9,460.4 1006,463.8 1010,467 1014.3,470.4 1018.9,473.8 1022.9,476.9 1025.7,479" fill="none" stroke="#0000ff" stroke-width="1" shape-rendering="crispEdges"/>
<polyline points="555,479 557.7,475.5 561.6,470.4 565.9,464.6 570,459 573.7,453.8 577.2,448.6 581,443 585,437 589.5,430.3 594.3,423 599.2,415.5 604,408 608.7,400.5 613.5,392.8 618.1,385.2 622.5,378 626.7,371.3 630.7,364.9 634.4,358.8 638,353 641.2,347.7 644,342.8 646.9,338 650,333 653.5,327.7 657.3,322.3 661.2,316.8 665,311 668.8,304.8 672.8,298.2 676.5,291.8 680,286 683.1,281 685.9,276.4 688.5,272.2 691,268 693.3,263.9 695.5,259.9 697.7,256 700,252 702.6,247.8 705.4,243.5 708.2,239.2 711,235 713.8,231 716.5,227 719.2,223 722,219 724.8,214.6 727.8,210 730.5,205.6 733,202 735,199.4 736.7,197.4 738.3,195.8 740,194 741.9,192.1 743.8,190.2 745.7,188.3 747.5,186.4 749.2,184.5 750.8,182.6 752.4,180.7 754,179 755.5,177.5 756.9,176.2 758.4,174.9 760,173.6 761.8,172.3 763.8,171 765.8,169.7 768,168.5 770.3,167.4 772.8,166.4 775.4,165.4 778,164.5 780.6,163.5 783.2,162.6 785.8,161.7 788.5,161 791.1,160.5 793.7,160.1 796.5,159.8 800,159.5 804.4,159.3 809.5,159.1 814.8,158.9 820,158.8 825,158.7 830.1,158.5 835.1,158.4 840,158.3 844.6,158.2 848.9,158.2 853.4,158.2 858.6,158 864.6,157.7 871.3,157.3 878.1,156.9 885,156.5 891.9,156.1 898.9,155.8 905.9,155.4 912.4,155 918.4,154.6 924.1,154.1 929.5,153.6 935,153.2 940.3,152.8 945.4,152.4 950.7,152.1 956.6,151.7 963.3,151.3 970.5,150.8 977.9,150.4 985,150 991.8,149.7 998.4,149.4 1004.8,149.3 1010.7,149.2 1015.9,149.2 1020.5,149.4 1025,149.6 1030,150 1035.6,150.4 1041.6,151 1047.8,151.6 1054,152.4 1060.5,153.4 1067.1,154.5 1073.7,155.7 1079.8,157 1085.4,158.3 1090.6,159.7 1095.4,161.1 1100,162.5 1104.1,163.8 1107.8,165 1111.3,166.2 1115,167.5 1119,169 1123.2,170.5 1127.3,172.1 1131,173.6 1134.1,175.1 1136.8,176.5 1139.4,178 1142,179.5 1144.7,181.2 1147.4,182.9 1150.2,184.6 1153,186.4 1155.9,188.2 1158.9,189.9 1162,191.7 1165,193.5 1168,195.3 1170.9,197.1 1173.9,199 1177,201 1180.1,203.1 1183.4,205.4 1186.6,207.7 1190,210 1193.6,212.3 1197.5,214.7 1201.2,217 1204.4,219 1206.9,220.7 1209,222.3 1210.9,223.7 1213,225 1215.4,226.3 1217.9,227.6 1220.4,228.7 1222.7,229.5 1224.7,229.9 1226.5,230 1228.2,229.8 1230,229.5 1232,229 1234,228.3 1236,227.4 1238,226.5 1240,225.4 1242.1,224.1 1244,222.9 1245.4,222 1246.2,221.5 1246.7,221.2 1246.8,221.1 1247,221" fill="none" stroke="#ff0000" stroke-width="1" shape-rendering="crispEdges"/>
<path d="M186 39.5H262" stroke="#ff0000" shape-rendering="crispEdges"/>
<path d="M186 64.5H262" stroke="#ff0000" stroke-dasharray="3 2" shape-rendering="crispEdges"/>
<text x="273.4" y="50">Net 1 target</text>
<text x="273.4" y="74.3">Net 1 achieved</text>
<path d="M472 39.5H548" stroke="#0000ff" shape-rendering="crispEdges"/>
<path d="M472 64.5H548" stroke="#0000ff" stroke-dasharray="3 2" shape-rendering="crispEdges"/>
<text x="559.6" y="50">Net 2 target</text>
<text x="559.6" y="74.3">Net 2 achieved</text>
<path d="M758 39.5H833" stroke="#00ff00" shape-rendering="crispEdges"/>
<path d="M758 64.5H833" stroke="#00ff00" stroke-dasharray="3 2" shape-rendering="crispEdges"/>
<text x="845" y="50">Net 3 target</text>
<text x="845" y="74.3">Net 3 achieved</text>
<text x="80" y="62">dB</text>
<text x="113.5" y="130.7" text-anchor="end">0.00</text>
<text x="113.5" y="193.7" text-anchor="end">-5.00</text>
<text x="113.5" y="257.7" text-anchor="end">-10.00</text>
<text x="113.5" y="321.7" text-anchor="end">-15.00</text>
<text x="113.5" y="384.7" text-anchor="end">-20.00</text>
<text x="113.5" y="448.7" text-anchor="end">-25.00</text>
<text x="95.5" y="513">200 Hz</text>
<text x="357" y="513" text-anchor="middle">500</text>
<text x="525.5" y="513" text-anchor="middle">1000</text>
<text x="691.5" y="513" text-anchor="middle">2000</text>
<text x="912" y="513" text-anchor="middle">5000</text>
<text x="1079.5" y="513" text-anchor="middle">10000</text>
<ellipse cx="174" cy="259" rx="66.5" ry="50.5" fill="none" stroke="#e61c26" stroke-width="2.9"/>
</svg>
<div class="a" style="left:1898px;top:2px;width:17px;height:948px;background:linear-gradient(90deg,#f3f1ea 0,#fdfdf8 30%,#fefefd 100%)"></div>
<div class="a" style="left:1899px;top:2px;width:15px;height:16px;border-radius:3px;border:1px solid #fff;background:linear-gradient(135deg,#e1eafe 0,#c9d7fc 40%,#b9cbf8 100%);box-shadow:inset -1px -1px 0 #9cb1ea,0 1px 0 #b6c9f3"><svg class="a" style="left:-1px;top:-1px" width="15" height="15" viewBox="0 0 15 15"><path d="M3.5 9.5l4-4l4 4" stroke="#4d6185" stroke-width="2.2" fill="none"/></svg></div>
<div class="a" style="left:1899px;top:27px;width:15px;height:883px;border-radius:3px;border:1px solid #fff;background:linear-gradient(90deg,#c9d7fc 0,#c3d3fd 50%,#b3c8fb 80%,#a9bef5 100%);box-shadow:inset -1px -1px 0 #98b0ee"><div class="a" style="left:3px;top:437px;width:7px;height:9px;background:repeating-linear-gradient(180deg,#eef4fe 0 1px,#8cb0f8 1px 2px)"></div></div>
<div class="a" style="left:1899px;top:932px;width:15px;height:16px;border-radius:3px;border:1px solid #fff;background:linear-gradient(135deg,#e1eafe 0,#c9d7fc 40%,#b9cbf8 100%);box-shadow:inset -1px -1px 0 #9cb1ea,0 1px 0 #b6c9f3"><svg class="a" style="left:-1px;top:-1px" width="15" height="15" viewBox="0 0 15 15"><path d="M3.5 5.5l4 4l4-4" stroke="#4d6185" stroke-width="2.2" fill="none"/></svg></div>
<div class="a" style="left:0;top:950px;width:1915px;height:24px;background:linear-gradient(180deg,#fffffc 0,#fffffc 2px,#ece9d8 2px,#ece9d8 4px,#aca899 4px,#aca899 5px,#ece9d8 5px,#ece9d8 21px,#fff 21px,#fff 22px,#f2efdc 22px,#f2efdc 24px)"></div>
<div class="a" style="left:0;top:974px;width:1915px;height:4px;background:linear-gradient(180deg,#7086de 0,#7086de 1px,#7587dc 1px,#7587dc 2px,#7a84d8 2px,#7a84d8 3px,#4d4fb8 3px)"></div>
<div class="a" style="left:0;top:978px;width:1915px;height:7px;background:linear-gradient(180deg,#2c6ce2 0,#2c6ce2 1px,#245ad8 1.5px,#245ad8 7px)"></div>
<div class="a" style="left:0;top:978px;width:92px;height:7px;border-radius:0 8px 0 0;background:linear-gradient(180deg,#5aae5a 0,#3d9a3d 2px,#358c35 7px)"></div>
<div class="a" style="left:10px;top:980px;width:9px;height:5px;border-radius:3px 3px 0 0;background:#e8641c;transform:skewX(-15deg)"></div><div class="a" style="left:20px;top:982px;width:6px;height:3px;background:#6cc04a"></div>
<div class="a" style="left:105px;top:980px;width:14px;height:5px;border-radius:5px 5px 0 0;background:#c8d4e8"></div>
<div class="a" style="left:129px;top:980px;width:14px;height:5px;border-radius:5px 5px 0 0;background:#d050e0"></div>
<div class="a" style="left:151px;top:980px;width:14px;height:5px;border-radius:5px 5px 0 0;background:#80c050"></div>
<div class="a" style="left:220px;top:980px;width:14px;height:5px;border-radius:5px 5px 0 0;background:#e8e8f0"></div>
<div class="a" style="left:243px;top:980px;width:14px;height:5px;border-radius:5px 5px 0 0;background:#e0e8d8"></div>
<div class="a" style="left:289px;top:980px;width:14px;height:5px;border-radius:5px 5px 0 0;background:#f0a050"></div>
<div class="a" style="left:197px;top:981px;width:16px;height:4px;background:#10108a"></div>
<div class="a" style="left:377px;top:979px;width:158px;height:6px;border-radius:3px 3px 0 0;background:linear-gradient(180deg,#5a9af8,#3c81f3)"></div>
<div class="a" style="left:537px;top:979px;width:158px;height:6px;border-radius:3px 3px 0 0;background:linear-gradient(180deg,#5a9af8,#3c81f3)"></div>
<div class="a" style="left:697px;top:979px;width:160px;height:6px;border-radius:3px 3px 0 0;background:linear-gradient(180deg,#5a9af8,#3c81f3)"></div>
<div class="a" style="left:1699px;top:978px;width:216px;height:7px;background:linear-gradient(180deg,#1ea2f1 0,#1290ea 7px);border-left:1px solid #0a5fb8"></div>
<div class="a" style="left:546px;top:981px;width:12px;height:4px;border-radius:4px 4px 0 0;background:#30c030;transform:skewX(-20deg)"></div>
<div class="a" style="left:388px;top:981px;width:12px;height:4px;border-radius:4px 4px 0 0;background:#30c030;transform:skewX(-20deg)"></div>
<div class="a" style="left:705px;top:981px;width:14px;height:4px;background:#ece9d8"></div>
<div class="a" style="left:1713px;top:981px;width:2px;height:4px;background:#ffffff"></div>
<div class="a" style="left:1728px;top:981px;width:13px;height:4px;background:#c8c8c8"></div>
<div class="a" style="left:1733px;top:981px;width:5px;height:4px;background:#c02020"></div>
<div class="a" style="left:1746px;top:981px;width:11px;height:4px;background:#505860"></div>
<div class="a" style="left:1768px;top:981px;width:6px;height:4px;background:#40c040"></div>
<div class="a" style="left:1781px;top:981px;width:16px;height:4px;background:#f4f4f4"></div>
<div class="a" style="left:1805px;top:981px;width:8px;height:4px;background:#702018"></div>
<div class="a" style="left:1821px;top:981px;width:6px;height:4px;background:#e8e8f0"></div>
<div class="a" style="left:1837px;top:981px;width:13px;height:4px;background:#a04048"></div>
<div class="a" style="left:1856px;top:981px;width:13px;height:4px;background:#d8e4f0"></div>
<style>
.sbb{position:absolute;width:14px;height:16px;border-radius:3px;border:1px solid #fff;background:linear-gradient(135deg,#e1eafe 0,#c9d7fc 40%,#b9cbf8 100%);box-shadow:inset -1px -1px 0 #9cb1ea,inset 1px 1px 0 #d6e0fd, 0 1px 0 #b6c9f3}
.sbt{position:absolute;width:14px;border-radius:3px;border:1px solid #fff;background:linear-gradient(90deg,#c9d7fc 0,#c3d3fd 50%,#b3c8fb 80%,#a9bef5 100%);box-shadow:inset -1px -1px 0 #98b0ee,0 1px 0 #b6c9f3}
.grip{position:absolute;left:3px;top:50%;margin-top:-5px;width:7px;height:9px;background:repeating-linear-gradient(180deg,#eef4fe 0 1px,#8cb0f8 1px 2px)}
.dlg{position:absolute;background:#ece9d8;border:1px solid #5b68cc;border-left-color:#7079d8;border-bottom-color:#4f53c2;border-top:0;box-shadow:inset 1px 0 0 #7489dd,inset 2px 0 0 #6b84dc,inset -1px 0 0 #7486dc,inset -2px 0 0 #6d80dc,inset 0 -1px 0 #7486dc,inset 0 -2px 0 #6d80dc,inset 3px 0 0 #f5efd8}
</style>
<div class="a" style="left:320px;top:918px;width:159px;height:31px;border-radius:7px;background:linear-gradient(180deg,#7585da 0,#8aa4ea 2px,#829fe6 5px,#7b97df 9px,#7a96de 14px,#80a0e5 20px,#85a9ea 25px,#7b90de 28px,#6c7ad2 31px);box-shadow:inset 0 0 0 1px #7483d8"></div>
<div class="cb x" style="left:453px;top:923px"><svg viewBox="0 0 19 19"><path d="M5 5l9 9M14 5l-9 9" stroke="#fff" stroke-width="2.2" fill="none"/></svg></div>
<div class="a" style="left:508px;top:918px;width:159px;height:31px;border-radius:7px;background:linear-gradient(180deg,#7585da 0,#8aa4ea 2px,#829fe6 5px,#7b97df 9px,#7a96de 14px,#80a0e5 20px,#85a9ea 25px,#7b90de 28px,#6c7ad2 31px);box-shadow:inset 0 0 0 1px #7483d8"></div>
<svg class="a" style="left:513px;top:927px" width="16" height="14" viewBox="0 0 16 14"><rect x=".5" y=".5" width="15" height="13" fill="#ececec" stroke="#303030"/><rect x="0" y="0" width="16" height="2" fill="#0a246a"/><path d="M2 11L8 4h6" stroke="#e04040" fill="none"/><path d="M4 4l9 8" stroke="#4040e0" fill="none"/></svg>
<div class="tt" style="left:533px;top:927px;letter-spacing:-0.28px">Commo...</div>
<div class="cb" style="left:596px;top:923px"><svg viewBox="0 0 19 19"><path d="M7.5 4.5h7v6h-3M4.5 8.5h7v6h-7z" fill="none" stroke="#fff" stroke-width="1.5"/></svg></div>
<div class="cb" style="left:619px;top:923px"><svg viewBox="0 0 19 19"><path d="M4.5 5.5h10v9h-10z M4.5 6.5h10" fill="none" stroke="#fff" stroke-width="1.6"/></svg></div>
<div class="cb x" style="left:642px;top:923px"><svg viewBox="0 0 19 19"><path d="M5 5l9 9M14 5l-9 9" stroke="#fff" stroke-width="2.2" fill="none"/></svg></div>
<div class="a" style="left:668px;top:918px;width:159px;height:31px;border-radius:7px;background:linear-gradient(180deg,#7585da 0,#8aa4ea 2px,#829fe6 5px,#7b97df 9px,#7a96de 14px,#80a0e5 20px,#85a9ea 25px,#7b90de 28px,#6c7ad2 31px);box-shadow:inset 0 0 0 1px #7483d8"></div>
<svg class="a" style="left:673px;top:927px" width="16" height="14" viewBox="0 0 16 14"><rect x=".5" y=".5" width="15" height="13" fill="#ececec" stroke="#303030"/><rect x="0" y="0" width="16" height="2" fill="#0a246a"/><path d="M2 10h3l1-4l2 5l2-3h4" stroke="#202020" fill="none"/></svg>
<div class="tt" style="left:693px;top:927px;letter-spacing:0.42px">Input i...</div>
<div class="cb" style="left:756px;top:923px"><svg viewBox="0 0 19 19"><path d="M7.5 4.5h7v6h-3M4.5 8.5h7v6h-7z" fill="none" stroke="#fff" stroke-width="1.5"/></svg></div>
<div class="cb" style="left:779px;top:923px"><svg viewBox="0 0 19 19"><path d="M4.5 5.5h10v9h-10z M4.5 6.5h10" fill="none" stroke="#fff" stroke-width="1.6"/></svg></div>
<div class="cb x" style="left:802px;top:923px"><svg viewBox="0 0 19 19"><path d="M5 5l9 9M14 5l-9 9" stroke="#fff" stroke-width="2.2" fill="none"/></svg></div>
<div class="a" style="left:828px;top:918px;width:159px;height:31px;border-radius:7px;background:linear-gradient(180deg,#7585da 0,#8aa4ea 2px,#829fe6 5px,#7b97df 9px,#7a96de 14px,#80a0e5 20px,#85a9ea 25px,#7b90de 28px,#6c7ad2 31px);box-shadow:inset 0 0 0 1px #7483d8"></div>
<svg class="a" style="left:833px;top:927px" width="16" height="14" viewBox="0 0 16 14"><rect x=".5" y=".5" width="15" height="13" fill="#ececec" stroke="#303030"/><rect x="0" y="0" width="16" height="2" fill="#0a246a"/><path d="M2 3l5 9M5 3l5 9M8 3l5 9" stroke="#e04040" fill="none"/><path d="M3.5 3l5 9M6.5 3l5 9" stroke="#4040e0" fill="none"/></svg>
<div class="dlg" style="left:-1px;top:527px;width:452px;height:425px;border-radius:8px 8px 0 0"></div><div class="a" style="left:2px;top:948px;width:447px;height:1px;background:#8292e2"></div>
<div class="tb" style="left:-1px;top:525px;width:452px"></div>
<svg class="a" style="left:4px;top:534px" width="15" height="13" viewBox="0 0 15 13"><rect x="0" y="0" width="15" height="13" fill="#fffffa"/><rect x="0" y="0" width="15" height="2" fill="#2a6ae0"/><rect x="0" y="0" width="15" height="1" fill="#1c56d0"/><rect x="12" y="0" width="2" height="2" fill="#e87848"/><path d="M.5 2v10.5M14.5 2v10.5" stroke="#b8c8f0"/><path d="M0 12.5h15" stroke="#1a3fa8"/></svg>
<div class="tt" style="left:24px;top:534px;letter-spacing:-0.22px">Эмуляция Фильтра</div>
<div class="cb x" style="left:425px;top:531px"><svg viewBox="0 0 19 19"><path d="M5 5l9 9M14 5l-9 9" stroke="#fff" stroke-width="2.2" fill="none"/></svg></div>
<div class="a" style="left:2px;top:555px;width:446px;height:393px;overflow:hidden"><div class="a" style="left:-2px;top:-555px">
<div class="a san" style="left:7px;top:558px;letter-spacing:-0.25px;color:#aca899">ПарамВывода</div>
<div class="a" style="left:2px;top:570px;width:446px;height:1px;background:repeating-linear-gradient(90deg,#303030 0 1px,#ece9d8 1px 2px)"></div>
<div class="a" style="left:2px;top:574px;width:430px;height:1px;background:#fff"></div>
<div class="grp" style="left:7px;top:586px;width:434px;height:73px"></div>
<div class="gl ser" style="left:14px;top:580px;letter-spacing:-0.28px;">File input</div>
<div class="fld" style="left:17px;top:596px;width:297px;height:21px;background:#ece9d8"><div class="a ser" style="left:5px;top:3.0px;letter-spacing:-0.28px;">C:\Documents and Settings\User\Рабочий стол\Новая папка\[</div></div>
<div class="btn ser" style="left:317px;top:594px;width:48px;height:24px;padding-top:5px;letter-spacing:-0.29px;">Обзор</div>
<div class="rad on" style="left:384px;top:597px"></div>
<div class="a ser" style="left:401px;top:597px;letter-spacing:-0.68px;">Файл</div>
<div class="rad" style="left:384px;top:614px"></div>
<div class="a ser" style="left:401px;top:614px;letter-spacing:-0.25px;">Wave</div>
<div class="rad" style="left:384px;top:632px"></div>
<div class="a ser" style="left:401px;top:632px;letter-spacing:-0.36px;">Счет</div>
<div class="chk" style="left:25px;top:621px"></div>
<div class="a ser" style="left:43px;top:621px;letter-spacing:-0.32px;">Стерео-&gt;Моно</div>
<div class="a ser" style="left:165.5px;top:625px;letter-spacing:-0.15px;">16bit PCM, stereo, 44100 Hz</div>
<div class="grp" style="left:7px;top:666px;width:95px;height:53px"></div>
<div class="gl ser" style="left:14px;top:660px;letter-spacing:-0.28px;">Старт/стоп (s)</div>
<div class="fld" style="left:17px;top:680px;width:72px;height:32px"><div class="a san" style="right:4px;top:2px;letter-spacing:-.2px">0.0</div><div class="a san" style="right:4px;top:16px;letter-spacing:-.2px">404.6</div></div>
<div class="btn ser" style="left:134px;top:668px;width:72px;height:25px;padding-top:5px;letter-spacing:-0.29px;">Играть</div>
<div class="btn ser" style="left:133px;top:698px;width:72px;height:25px;padding-top:5px;letter-spacing:-0.34px;">Стоп</div>
<div class="a" style="left:103.0px;top:733px;width:9px;height:14px;border:1px solid;border-color:#aca899 #fff #fff #aca899"></div>
<div class="a" style="left:112.8px;top:733px;width:9px;height:14px;border:1px solid;border-color:#aca899 #fff #fff #aca899"></div>
<div class="a" style="left:122.6px;top:733px;width:9px;height:14px;border:1px solid;border-color:#aca899 #fff #fff #aca899"></div>
<div class="a" style="left:132.4px;top:733px;width:9px;height:14px;border:1px solid;border-color:#aca899 #fff #fff #aca899"></div>
<div class="a" style="left:142.2px;top:733px;width:9px;height:14px;border:1px solid;border-color:#aca899 #fff #fff #aca899"></div>
<div class="a" style="left:152.0px;top:733px;width:9px;height:14px;border:1px solid;border-color:#aca899 #fff #fff #aca899"></div>
<div class="a" style="left:114px;top:735px;width:5px;height:10px;background:#00ff00"></div>
<div class="a" style="left:190px;top:740px;width:3px;height:105px;background:#fff"></div>
<div class="a" style="left:197px;top:740px;width:3px;height:105px;background:#fff"></div>
<div class="a" style="left:205px;top:740px;width:3px;height:105px;background:#fff"></div>
<div class="grp" style="left:230px;top:666px;width:212px;height:34px"></div>
<div class="gl ser" style="left:237px;top:660px;letter-spacing:-0.41px;">Тип Фильтра</div>
<div class="rad on" style="left:240px;top:677px"></div>
<div class="a ser" style="left:257px;top:677px;letter-spacing:-0.33px;">IIR</div>
<div class="rad" style="left:312px;top:677px"></div>
<div class="a ser" style="left:329px;top:677px;letter-spacing:-0.15px;">Circ. convolution</div>
<div class="grp" style="left:230px;top:708px;width:212px;height:250px"></div>
<div class="fld" style="left:239px;top:715px;width:77px;height:21px"><div class="a ser" style="left:3px;top:4.0px;letter-spacing:-0.15px;">Net 2</div><div class="dd"></div></div>
<div class="a ser" style="left:240.5px;top:741px;letter-spacing:-0.65px;">ПорядФиль:</div>
<div class="fld" style="left:301px;top:738px;width:74px;height:21px"><div class="a ser" style="left:3px;top:4.0px;">10</div><div class="dd"></div></div>
<div class="chk" style="left:242px;top:766px"></div>
<div class="a ser" style="left:259.5px;top:766px;letter-spacing:-0.45px;">ЗащитДинамик</div>
<div class="a ser" style="left:250px;top:786px;letter-spacing:-0.46px;">Защита Частоты</div>
<div class="fld" style="left:334px;top:782px;width:60px;height:21px;background:#ece9d8"><div class="a san" style="left:5px;top:3.0px;color:#aca899">500</div></div>
<div class="a ser" style="left:397px;top:786px;letter-spacing:-0.60px;">Hz</div>
<div class="a ser" style="left:250px;top:807px;letter-spacing:-0.48px;">ЗащитаКонденс</div>
<div class="fld" style="left:334px;top:803px;width:60px;height:21px;"><div class="a ser" style="left:4px;top:3.0px;letter-spacing:-0.25px;">undef.</div></div>
<div class="a ser" style="left:397px;top:807px;letter-spacing:-0.84px;">uF</div>
<div class="a ser" style="left:250px;top:835px;letter-spacing:-0.46px;">Кабель R</div>
<div class="fld" style="left:334px;top:831px;width:60px;height:21px;"><div class="a san" style="left:5px;top:3.0px;">0.0</div></div>
<div class="a ser" style="left:397px;top:835px;letter-spacing:-0.33px;">mOhm</div>
<div class="a ser" style="left:250px;top:858px;letter-spacing:-0.53px;">Кабель L</div>
<div class="fld" style="left:334px;top:853px;width:60px;height:21px;"><div class="a san" style="left:5px;top:3.0px;">0.0</div></div>
<div class="a ser" style="left:397px;top:858px;letter-spacing:-1.18px;">uH</div>
<div class="a ser" style="left:241px;top:882px;letter-spacing:-0.56px;">Задерж</div>
<div class="fld" style="left:276px;top:878px;width:50px;height:20px;"><div class="a san" style="left:4px;top:3.0px;">0.000</div></div>
<div class="a ser" style="left:328px;top:882px;letter-spacing:-1.00px;">ms</div>
<div class="fld" style="left:356px;top:878px;width:51px;height:20px;"><div class="a san" style="left:5px;top:3.0px;">0.00</div></div>
<div class="a ser" style="left:409px;top:883px;letter-spacing:-0.33px;">cm</div>
<div class="chk" style="left:242px;top:906px"></div>
<div class="a ser" style="left:260px;top:906px;letter-spacing:-0.38px;">Use amplitude weighting</div>
<div class="chk" style="left:242px;top:924px"></div>
<div class="a ser" style="left:260px;top:924px;letter-spacing:-0.13px;">Use iterative fit algorithm</div>
<div class="chk" style="left:242px;top:941px"></div>
<div class="a ser" style="left:260px;top:941px;letter-spacing:-0.54px;">Downsampled filter</div>
<div class="grp" style="left:8px;top:827px;width:80px;height:52px"></div>
<div class="gl ser" style="left:12px;top:821px;letter-spacing:-0.29px;">Диаграмма</div>
<div class="rad on" style="left:12px;top:838px"></div>
<div class="a ser" style="left:29px;top:838px;letter-spacing:-0.49px;">Величина</div>
<div class="rad" style="left:12px;top:857px"></div>
<div class="a ser" style="left:29px;top:857px;letter-spacing:-0.72px;">Фаза</div>
<div class="btn ser" style="left:92px;top:832px;width:54px;height:25px;padding-top:5px;letter-spacing:-0.42px;">Обновить</div>
<div class="chk" style="left:95px;top:868px"><svg class="a" style="left:1px;top:1px" width="9" height="9" viewBox="0 0 9 9"><path d="M1.2 3.6l2.3 2.4l4.3-4.6" stroke="#000" stroke-width="1.9" fill="none"/></svg></div>
<div class="a ser" style="left:113px;top:868px;letter-spacing:-0.50px;">ВсегдаОбновлять</div>
<div class="a ser" style="left:10px;top:900px;letter-spacing:-0.41px;">Усиление</div>
<div class="fld" style="left:70px;top:896px;width:59px;height:20px;"><div class="a san" style="left:5px;top:3.0px;">-6.0</div></div>
<div class="a ser" style="left:132.6px;top:900px;letter-spacing:-1.00px;">dB</div>
<div class="btn san q" style="left:182px;top:894px;width:24px;height:25px;padding-top:5px;">?</div>
<div class="a" style="left:432px;top:575px;width:16px;height:372px;background:linear-gradient(90deg,#eeebdc 0,#f6f5ee 25%,#fdfdfb 60%,#fff)"></div>
<div class="sbb" style="left:433px;top:575px"><svg class="a" style="left:-1px;top:-1px" width="14" height="15" viewBox="0 0 14 15"><path d="M3.5 9l3.5-3.5l3.5 3.5" stroke="#4d6185" stroke-width="2" fill="none"/></svg></div>
<div class="sbb" style="left:433px;top:931px"><svg class="a" style="left:-1px;top:-1px" width="14" height="15" viewBox="0 0 14 15"><path d="M3.5 6l3.5 3.5l3.5-3.5" stroke="#4d6185" stroke-width="2" fill="none"/></svg></div>
<div class="sbt" style="left:433px;top:592px;height:56px"><div class="grip"></div></div>
<div class="a" style="left:216px;top:651px;width:212px;height:114px;border:3px solid #ed1c24"></div>
<div class="a" style="left:5px;top:818px;width:202px;height:70px;border:3px solid #ed1c24"></div>
</div></div>
<div class="dlg" style="left:451px;top:528px;width:394px;height:387px;border-radius:8px 8px 0 0"></div>
<div class="a" style="left:454px;top:911px;width:388px;height:1px;background:#8292e2"></div>
<div class="tb" style="left:451px;top:526px;width:394px"></div>
<svg class="a" style="left:456px;top:535px" width="15" height="13" viewBox="0 0 15 13"><rect x="0" y="0" width="15" height="13" fill="#fffffa"/><rect x="0" y="0" width="15" height="2" fill="#2a6ae0"/><rect x="0" y="0" width="15" height="1" fill="#1c56d0"/><rect x="12" y="0" width="2" height="2" fill="#e87848"/><path d="M.5 2v10.5M14.5 2v10.5" stroke="#b8c8f0"/><path d="M0 12.5h15" stroke="#1a3fa8"/></svg>
<div class="tt" style="left:476px;top:535px;letter-spacing:-0.07px">Output settings</div>
<div class="cb x" style="left:818px;top:532px"><svg viewBox="0 0 19 19"><path d="M5 5l9 9M14 5l-9 9" stroke="#fff" stroke-width="2.2" fill="none"/></svg></div>
<div class="grp" style="left:459px;top:565px;width:379px;height:48px"></div>
<div class="gl ser" style="left:466px;top:559px;letter-spacing:-0.20px;">Type of soundcard</div>
<div class="rad" style="left:467px;top:574px"></div>
<div class="a ser" style="left:484px;top:574px;letter-spacing:-0.30px;">Professional audio card (e.g M-Audio, Echo)</div>
<div class="rad on" style="left:467px;top:593px"></div>
<div class="a ser" style="left:484px;top:593px;letter-spacing:-0.30px;">Multimedia soundcard (e.g Creative labs, Turtle beach)</div>
<div class="grp" style="left:459px;top:624px;width:377px;height:191px"></div>
<div class="gl ser" style="left:466px;top:618px;letter-spacing:-0.32px;">Multimedia soundcard channel mapping</div>
<div class="a ser" style="left:468px;top:643px;letter-spacing:-0.50px;">Device</div>
<div class="fld" style="left:543px;top:640px;width:282px;height:21px"><div class="a ser" style="left:3px;top:4.0px;letter-spacing:-0.30px;">Realtek HD Audio output</div><div class="dd"></div></div>
<div class="chk" style="left:481px;top:679px"></div>
<div class="a ser" style="left:499px;top:679px;letter-spacing:-0.29px;">Super interleave</div>
<div class="chk" style="left:645px;top:679px"><svg class="a" style="left:1px;top:1px" width="9" height="9" viewBox="0 0 9 9"><path d="M1.2 3.6l2.3 2.4l4.3-4.6" stroke="#000" stroke-width="1.9" fill="none"/></svg></div>
<div class="a ser" style="left:663px;top:679px;letter-spacing:-0.28px;">Use WAVEFORMATEXT</div>
<div class="a ser" style="left:471px;top:707px;letter-spacing:-0.27px;">Net 1 L</div>
<div class="fld" style="left:516px;top:703px;width:122px;height:21px"><div class="a ser" style="left:5px;top:4.0px;letter-spacing:-0.17px;">1 Front L</div><div class="dd"></div></div>
<div class="a ser" style="left:645px;top:707px;letter-spacing:-0.19px;">Net 1 R</div>
<div class="fld" style="left:690px;top:703px;width:122px;height:21px"><div class="a ser" style="left:3px;top:4.0px;letter-spacing:-0.25px;">Not mapped</div><div class="dd"></div></div>
<div class="a ser" style="left:471px;top:733px;letter-spacing:-0.27px;">Net 2 L</div>
<div class="fld" style="left:516px;top:729px;width:122px;height:21px"><div class="a ser" style="left:5px;top:4.0px;letter-spacing:-0.11px;">2 Front R</div><div class="dd"></div></div>
<div class="a ser" style="left:645px;top:733px;letter-spacing:-0.19px;">Net 2 R</div>
<div class="fld" style="left:690px;top:729px;width:122px;height:21px"><div class="a ser" style="left:3px;top:4.0px;letter-spacing:-0.25px;">Not mapped</div><div class="dd"></div></div>
<div class="a ser" style="left:471px;top:757px;letter-spacing:-0.27px;">Net 3 L</div>
<div class="fld" style="left:516px;top:754px;width:122px;height:21px"><div class="a ser" style="left:3px;top:4.0px;letter-spacing:-0.25px;">Not mapped</div><div class="dd"></div></div>
<div class="a ser" style="left:645px;top:757px;letter-spacing:-0.19px;">Net 3 R</div>
<div class="fld" style="left:690px;top:754px;width:122px;height:21px"><div class="a ser" style="left:3px;top:4.0px;letter-spacing:-0.25px;">Not mapped</div><div class="dd"></div></div>
<div class="btn san q" style="left:711px;top:822px;width:24px;height:25px;padding-top:5px;">?</div>
<div class="grp" style="left:459px;top:836px;width:211px;height:69px"></div>
<div class="a ser" style="left:465px;top:849px;letter-spacing:-0.40px;">Buffer size</div>
<div class="fld" style="left:585px;top:843px;width:71px;height:21px"><div class="a ser" style="left:3px;top:4.0px;">8192</div><div class="dd"></div></div>
<div class="a ser" style="left:465px;top:876px;letter-spacing:-0.38px;">Number of buffers</div>
<div class="fld" style="left:583px;top:871px;width:59px;height:20px;"><div class="a ser" style="left:5px;top:3.0px;">10</div></div>
<style>
.gw{position:absolute;color:#fff;white-space:nowrap;font-family:"Liberation Sans",sans-serif}
.gc{position:absolute;color:#fff;white-space:nowrap;font-family:"Liberation Sans",sans-serif;font-size:12px;line-height:12px;text-align:center;width:120px;transform:scaleX(.88)}
.gtab{position:absolute;top:573px;font-family:"Liberation Sans",sans-serif;font-size:13.5px;line-height:16px;color:#0000ff;white-space:nowrap;transform-origin:0 50%;transform:scaleX(.97)}
.vtr{position:absolute;width:4px;background:linear-gradient(90deg,#2f6f7f 0 2px,#478a99 2px 3px,#7ab4c0 3px)}
.vth{position:absolute;width:8px;height:8px;margin:0 0 0 1px;background:#eef0f0;box-shadow:0 0 0 1px rgba(40,90,105,.6)}
.bal{position:absolute;width:43px;height:3px;background:linear-gradient(180deg,#2f6f7f 0 1px,#6aa6b4 1px);}
.balt{position:absolute;width:6px;height:7px;background:#f2f4f4;box-shadow:0 0 0 1px rgba(40,90,105,.4)}
.gline{position:absolute;left:1021px;width:368px;height:1px;background:rgba(150,200,210,.35)}
.gsep{position:absolute;left:922px;width:512px;height:2px;background:linear-gradient(180deg,#3a7f90 0 1px,#79b5c0 1px)}
.gcombo{position:absolute;border:1px solid #b3a898;font-family:"Liberation Sans",sans-serif;font-size:13.5px;line-height:21px;color:#fff;padding-left:4px;white-space:nowrap}
.gcombo::after{content:"";position:absolute;right:7px;top:8px;border:4.5px solid transparent;border-top:5px solid #000;border-bottom:0}
.ball{position:absolute;width:21px;height:21px;border-radius:50%;background:radial-gradient(circle at 35% 25%,#8fd0f8 0,#4fa0e0 35%,#2878c8 70%,#1c60a8 100%);box-shadow:0 1px 3px 1px rgba(30,70,85,.55)}
.led{position:absolute;width:13px;height:13px;border-radius:50%;box-shadow:0 0 0 1px rgba(40,80,90,.6)}
</style>
<div class="a" style="left:844px;top:524px;width:631px;height:470px;border-radius:9px 10px 0 0;background:linear-gradient(90deg,#2c95ab 0,#2a93aa 4px,#1a8298 7px,#157a8e 11px,#1b8295 15px,#1b8295 613px,#1a7e92 615px,#2191a7 620px,#279bb1 625px,#1f8a9f 631px)"></div>
<div class="a" style="left:845px;top:896px;width:14px;height:54px;background:repeating-linear-gradient(180deg,rgba(120,210,220,.0) 0 2px,rgba(120,210,220,.25) 2px 3px)"></div>
<div class="a" style="left:1459px;top:896px;width:15px;height:54px;background:repeating-linear-gradient(180deg,rgba(120,210,220,.0) 0 2px,rgba(120,210,220,.25) 2px 3px)"></div>
<div class="a" style="left:859px;top:522px;width:599px;height:470px;border-radius:8px 8px 0 0;background:linear-gradient(180deg,#a5dfe3 0,#a0dcdf 40px,#97d6db 68px,#8fd3d9 82px,#6fbccb 86px,#78c3d0 92px,#66b4c4 96px,#5aa6b6 100px,#5aa6b6 430px,#4d98a9 446px,#4b96a7 470px);box-shadow:inset 1px 0 0 #b8e6ea,inset -1px 0 0 #7fc3cc"></div>
<div class="a" style="left:860px;top:523px;width:62px;height:44px;background:linear-gradient(90deg,#a8e0e4,#a2dde1)"></div>
<div class="a" style="left:1389px;top:522px;width:69px;height:46px;border-radius:0 6px 0 0;background:linear-gradient(180deg,#b2e7ea 0,#a0dde1 8px,#8dd1d7 24px,#84c9d0 46px)"></div>
<div class="a" style="left:1351px;top:568px;width:107px;height:22px;background:linear-gradient(90deg,rgba(132,201,208,0) 0,#86cad1 40px,#80c5cc 100%)"></div>
<div class="a" style="left:921px;top:522px;width:468px;height:43px;border-radius:0 0 22px 22px;border:1px solid #c4ecef;border-top:0;background:linear-gradient(180deg,#62aab6 0,#84bfc8 2px,#90c8d0 4px,#78b8c2 6px,#5aa5b2 9px,#55a0ae 16px,#519dab 30px,#4c98a7 43px)"></div>
<div class="a" style="left:945px;top:554px;width:148px;height:5px;background-image:linear-gradient(90deg,rgba(175,218,225,.6) 0 1px,transparent 1px);background-size:5px 4px;-webkit-mask:linear-gradient(180deg,#000 0 1px,transparent 1px 4px,#000 4px 5px)"></div>
<div class="a" style="left:1226px;top:554px;width:148px;height:5px;background-image:linear-gradient(90deg,rgba(175,218,225,.6) 0 1px,transparent 1px);background-size:5px 4px;-webkit-mask:linear-gradient(180deg,#000 0 1px,transparent 1px 4px,#000 4px 5px)"></div>
<div class="gw" style="left:1116px;top:533px;font-weight:bold;font-size:15px;line-height:15px;letter-spacing:.1px;-webkit-text-stroke:.5px #fff;transform-origin:0 0;transform:scaleX(1.09)">GIGABYTE<span style="font-size:4px;vertical-align:top;line-height:6px;-webkit-text-stroke:0">™</span></div>
<div class="gw" style="left:1116px;top:549px;font-weight:bold;font-size:6px;line-height:7px;letter-spacing:4.85px">TECHNOLOGY</div>
<div class="a" style="left:1413px;top:543px;width:15px;height:15px;border-radius:50%;background:radial-gradient(circle at 40% 30%,#6ab0c0,#3a8898 70%,#2a7080);box-shadow:0 0 0 1px #2b6a78,0 1px 0 2px rgba(190,235,238,.7)"><div class="a" style="left:4px;top:6px;width:7px;height:2px;background:#fff"></div></div>
<div class="a" style="left:1433px;top:539px;width:19px;height:19px;border-radius:50%;background:radial-gradient(circle at 40% 30%,#6ab0c0,#3a8898 70%,#2a7080);box-shadow:0 0 0 1px #2b6a78,0 1px 0 2px rgba(190,235,238,.7)"><svg width="19" height="19" viewBox="0 0 19 19"><path d="M6.5 6.5l6 6M12.5 6.5l-6 6" stroke="#fff" stroke-width="2.2"/></svg></div>
<div class="a" style="left:860px;top:567px;width:597px;height:1px;background:rgba(200,238,240,.8)"></div>
<svg class="a" style="left:860px;top:568px" width="500" height="23" viewBox="860 568 500 23"><path d="M867 590L889 569H993L1003 580L993 590Z" fill="#84cdd6"/><path d="M994 590L1014 569H1067L1088 590Z" fill="#a4dee2"/><path d="M1088 590L1079 580L1090 569H1243L1254 580L1264 590Z" fill="#84cdd6"/><path d="M1264 590L1255 580L1266 569H1329L1350 590Z" fill="#84cdd6"/><path d="M867 590L889 569H993L1003 580L993 590M994 590L1014 569H1067L1088 590L1079 580L1090 569H1243L1254 580L1264 590L1255 580L1266 569H1329L1350 590" fill="none" stroke="#a9b8ee" stroke-width="1"/></svg>
<div class="gtab" style="left:890px;letter-spacing:-.2px">Звуковой эффект</div>
<div class="gtab" style="left:1018px;color:#000080">Микшер</div>
<div class="gtab" style="left:1092px;letter-spacing:.1px">Звуковые входы/выходы</div>
<div class="gtab" style="left:1268px;letter-spacing:-.25px">Микрофон</div>
<div class="a" style="left:845px;top:570px;width:526px;height:1px;background:repeating-linear-gradient(90deg,#9a3a3a 0 1px,transparent 1px 2px)"></div>
<div class="a" style="left:1412px;top:568px;width:39px;height:20px;background:#a2dde1;border:1px solid #b4bcf0"></div><div class="a" style="left:1431px;top:568px;width:1px;height:20px;background:#b4bcf0"></div>
<svg class="a" style="left:1412px;top:568px" width="39" height="20" viewBox="0 0 39 20"><path d="M12 6v8l-4-4z" fill="#b0a69a"/><path d="M27 6v8l4-4z" fill="#000"/></svg>
<div class="a" style="left:860px;top:590px;width:597px;height:17px;background:linear-gradient(180deg,#5aa3b0 0,#9ad6dc 2px,#84c9d3 5px,#6ebccb 9px,#73c0cd 13px,#8ed0d8 16px,#5e9eaa 17px)"></div>
<div class="a" style="left:868px;top:606px;width:584px;height:360px;border-radius:20px 18px 20px 20px;background:linear-gradient(180deg,#315e69 0,#3d7684 4px,#468292 9px,#4a8797 20px,#4b8999 60px,#5091a1 120px,#5698a8 180px,#5a9fae 250px,#5fa6b4 320px,#61a8b6 344px,#5799a7 351px,#487f8c 356.5px,#a0d8dd 357px,#9ad4da 359px,#5aa5b4 360px);box-shadow:inset 3px 0 3px -1px rgba(47,100,112,.8),inset -7px 0 7px -3px rgba(45,95,108,.75),0 0 0 1px rgba(160,216,222,.55)"></div>
<div class="gcombo" style="left:1211px;top:610px;width:220px;height:24px">Realtek HD Audio output</div>
<div class="gcombo" style="left:1207px;top:777px;width:220px;height:24px">Realtek HD Audio Input</div>
<div class="gw" style="left:880px;top:623px;font-size:18px;line-height:20px;letter-spacing:.22px;-webkit-text-stroke:.35px #fff">оспроизведени</div>
<div class="gw" style="left:914px;top:790px;font-size:17.5px;line-height:20px;letter-spacing:.3px">Запись</div>
<div class="a" style="left:881px;top:650px;width:112px;height:97px;border-radius:10px;background:#43838f;box-shadow:0 0 2px rgba(50,100,115,.7)"></div>
<div class="a" style="left:884px;top:653px;width:106px;height:91px;border-radius:7px;background:linear-gradient(180deg,#2c5666 0,#3a7080 6px,#4a8695 18px,#5a9aaa 40px,#67a9b8 65px,#6fb1bf 100%)"></div>
<div class="a" style="left:881px;top:818px;width:112px;height:96px;border-radius:10px;background:#43838f;box-shadow:0 0 2px rgba(50,100,115,.7)"></div>
<div class="a" style="left:884px;top:821px;width:106px;height:90px;border-radius:7px;background:linear-gradient(180deg,#2c5666 0,#3a7080 6px,#4a8695 18px,#5a9aaa 40px,#67a9b8 65px,#6fb1bf 100%)"></div>
<div class="a" style="left:892px;top:664px;width:90px;height:10px;border-radius:5px;background:linear-gradient(180deg,#356a7a,#4a8a9a);box-shadow:0 0 0 1px rgba(120,170,180,.5)"></div>
<div class="a" style="left:931px;top:664px;width:13px;height:10px;background:repeating-linear-gradient(90deg,#8eecc8 0 2px,#2a7a68 2px 3px) 3px 0/9px 100% no-repeat,#8eecc8;background-color:#8eecc8;box-shadow:0 0 0 1px #3f9a8a"></div>
<div class="a" style="left:908px;top:682px;width:58px;height:58px;border-radius:50%;background:radial-gradient(circle at 50% 45%,#4a8a98 0,#3c7a88 78%,#2a5f6d 100%);box-shadow:0 2px 4px rgba(20,60,72,.75)"></div>
<div class="a" style="left:913px;top:687px;width:48px;height:48px;border-radius:50%;background:radial-gradient(circle at 42% 35%,#b8fff2 0,#a4f6e8 30%,#7edcd2 55%,#55b8b8 78%,#3a98a0 100%);box-shadow:inset 0 0 0 1px rgba(210,255,250,.35),0 0 0 1px #3b8c98"></div>
<div class="a" style="left:931px;top:694px;width:4px;height:4px;border-radius:50%;background:#000"></div>
<div class="a" style="left:897px;top:713px;width:5px;height:1px;background:#e6f4f4"></div>
<div class="a" style="left:970px;top:713px;width:7px;height:1px;background:#e6f4f4"></div><div class="a" style="left:973px;top:710px;width:1px;height:7px;background:#e6f4f4"></div>
<div class="ball" style="left:889px;top:751px"><svg width="21" height="21" viewBox="0 0 21 21"><path d="M7.2 3.6h2v2.6h2.6V3.6h2v3.6q0 1.6-2 2v2.6q2 .4 2 2v3.6h-2v-2.6H9.2v2.6h-2v-3.6q0-1.6 2-2V9.2q-2-.4-2-2z" fill="#fff"/></svg></div>
<div class="ball" style="left:951px;top:751px"><svg width="21" height="21" viewBox="0 0 21 21"><path d="M5 8.5h2.5l4-3.5v11l-4-3.5H5z" fill="#fff"/><path d="M13.5 8l2.5-2M13.8 10.5h3M13.5 13l2.5 2" stroke="#fff" stroke-width="1.2"/></svg></div>
<div class="ball" style="left:889px;top:921px"><svg width="21" height="21" viewBox="0 0 21 21"><path d="M7.2 3.6h2v2.6h2.6V3.6h2v3.6q0 1.6-2 2v2.6q2 .4 2 2v3.6h-2v-2.6H9.2v2.6h-2v-3.6q0-1.6 2-2V9.2q-2-.4-2-2z" fill="#fff"/></svg></div>
<div class="gsep" style="top:775px"></div>
<div class="gsep" style="top:948px"></div>
<svg class="a" style="left:884px;top:819px" width="106" height="93" viewBox="884 819 106 93"><g fill="none" stroke="#fff"><path d="M965 820v26" stroke-width="4.5"/><rect x="958.8" y="845" width="12.4" height="23" rx="6.2" stroke-width="1.5" stroke="#d9f6f6"/><path d="M955.5 858v3a9.5 9.5 0 0 0 19 0v-3" stroke-width="1.3" stroke="#d9f6f6"/><rect x="959" y="860" width="12" height="3.6" fill="#fff" stroke="none"/><circle cx="926.5" cy="857" r="13.6" stroke-width="1.5" stroke="#e6fafa"/></g><g fill="#fff"><circle cx="926.5" cy="858" r="11"/><rect x="911" y="854" width="4" height="11" rx="2"/><rect x="938" y="854" width="4" height="11" rx="2"/><path d="M918 878h18v11h-18z"/><path d="M905.5 870l5.5-3l8.5 11v5l-5 2zM947.5 870l-5.5-3l-8.5 11v5l5 2z"/><path d="M919 871h15l2 8h-19z"/></g><ellipse cx="926.5" cy="861.5" rx="6.5" ry="3.4" fill="#4f96a6"/><g stroke="#e8ffff" stroke-width="1" opacity=".8"><path d="M901 890.5h88"/><path d="M901 890l-12 21M911 890l-9 21M921 890l-7 21M930 890l-4 21M939 890l-1 21M948 890l2 21M957 890l5 21M967 890l7 21M978 890l8 21" stroke-width="1.3"/></g><g stroke="#d0f4f4" stroke-width=".5" opacity=".45"><path d="M899 894h90M897 897h92M895 900h94M893 903h96M891 906h98M889 909h100"/></g><g fill="#fff" opacity=".9"><circle cx="916" cy="900" r="1.3"/><circle cx="924" cy="905" r="1.3"/><circle cx="937" cy="901" r="1.3"/><circle cx="949" cy="908" r="1.3"/><circle cx="960" cy="899" r="1.3"/><circle cx="982" cy="902" r="1.3"/></g></svg>
<div class="a" style="left:1009px;top:674px;width:10px;height:1px;background:rgba(205,232,236,.9)"></div>
<div class="a" style="left:1010px;top:678px;width:9px;height:1px;background:rgba(205,232,236,.9)"></div>
<div class="a" style="left:1010px;top:682px;width:9px;height:1px;background:rgba(205,232,236,.9)"></div>
<div class="a" style="left:1011px;top:686px;width:8px;height:1px;background:rgba(205,232,236,.9)"></div>
<div class="a" style="left:1011px;top:690px;width:8px;height:1px;background:rgba(205,232,236,.9)"></div>
<div class="a" style="left:1012px;top:694px;width:7px;height:1px;background:rgba(205,232,236,.9)"></div>
<div class="a" style="left:1012px;top:698px;width:7px;height:1px;background:rgba(205,232,236,.9)"></div>
<div class="a" style="left:1013px;top:702px;width:6px;height:1px;background:rgba(205,232,236,.9)"></div>
<div class="a" style="left:1013px;top:706px;width:6px;height:1px;background:rgba(205,232,236,.9)"></div>
<div class="a" style="left:1014px;top:710px;width:5px;height:1px;background:rgba(205,232,236,.9)"></div>
<div class="a" style="left:1014px;top:714px;width:5px;height:1px;background:rgba(205,232,236,.9)"></div>
<div class="a" style="left:1015px;top:718px;width:4px;height:1px;background:rgba(205,232,236,.9)"></div>
<div class="a" style="left:1015px;top:722px;width:4px;height:1px;background:rgba(205,232,236,.9)"></div>
<div class="a" style="left:1016px;top:726px;width:3px;height:1px;background:rgba(205,232,236,.9)"></div>
<div class="a" style="left:1016px;top:730px;width:3px;height:1px;background:rgba(205,232,236,.9)"></div>
<div class="a" style="left:1017px;top:734px;width:2px;height:1px;background:rgba(205,232,236,.9)"></div>
<div class="a" style="left:1017px;top:738px;width:2px;height:1px;background:rgba(205,232,236,.9)"></div>
<div class="a" style="left:1018px;top:742px;width:1px;height:1px;background:rgba(205,232,236,.9)"></div>
<div class="a" style="left:1389px;top:674px;width:6px;height:1px;background:rgba(205,232,236,.85)"></div>
<div class="a" style="left:1389px;top:680px;width:2px;height:1px;background:rgba(205,232,236,.85)"></div>
<div class="a" style="left:1389px;top:686px;width:6px;height:1px;background:rgba(205,232,236,.85)"></div>
<div class="a" style="left:1389px;top:693px;width:2px;height:1px;background:rgba(205,232,236,.85)"></div>
<div class="a" style="left:1389px;top:699px;width:6px;height:1px;background:rgba(205,232,236,.85)"></div>
<div class="a" style="left:1389px;top:705px;width:2px;height:1px;background:rgba(205,232,236,.85)"></div>
<div class="a" style="left:1389px;top:711px;width:6px;height:1px;background:rgba(205,232,236,.85)"></div>
<div class="a" style="left:1389px;top:717px;width:2px;height:1px;background:rgba(205,232,236,.85)"></div>
<div class="a" style="left:1389px;top:723px;width:6px;height:1px;background:rgba(205,232,236,.85)"></div>
<div class="a" style="left:1389px;top:730px;width:2px;height:1px;background:rgba(205,232,236,.85)"></div>
<div class="a" style="left:1389px;top:736px;width:6px;height:1px;background:rgba(205,232,236,.85)"></div>
<div class="a" style="left:1389px;top:742px;width:2px;height:1px;background:rgba(205,232,236,.85)"></div>
<div class="gline" style="top:674px"></div>
<div class="gline" style="top:688px"></div>
<div class="gline" style="top:701px"></div>
<div class="gline" style="top:715px"></div>
<div class="gline" style="top:728px"></div>
<div class="gline" style="top:742px"></div>
<div class="a" style="left:1011px;top:843px;width:10px;height:1px;background:rgba(205,232,236,.9)"></div>
<div class="a" style="left:1012px;top:847px;width:9px;height:1px;background:rgba(205,232,236,.9)"></div>
<div class="a" style="left:1012px;top:851px;width:9px;height:1px;background:rgba(205,232,236,.9)"></div>
<div class="a" style="left:1013px;top:855px;width:8px;height:1px;background:rgba(205,232,236,.9)"></div>
<div class="a" style="left:1013px;top:859px;width:8px;height:1px;background:rgba(205,232,236,.9)"></div>
<div class="a" style="left:1014px;top:863px;width:7px;height:1px;background:rgba(205,232,236,.9)"></div>
<div class="a" style="left:1014px;top:867px;width:7px;height:1px;background:rgba(205,232,236,.9)"></div>
<div class="a" style="left:1015px;top:871px;width:6px;height:1px;background:rgba(205,232,236,.9)"></div>
<div class="a" style="left:1015px;top:875px;width:6px;height:1px;background:rgba(205,232,236,.9)"></div>
<div class="a" style="left:1016px;top:879px;width:5px;height:1px;background:rgba(205,232,236,.9)"></div>
<div class="a" style="left:1016px;top:883px;width:5px;height:1px;background:rgba(205,232,236,.9)"></div>
<div class="a" style="left:1017px;top:887px;width:4px;height:1px;background:rgba(205,232,236,.9)"></div>
<div class="a" style="left:1017px;top:891px;width:4px;height:1px;background:rgba(205,232,236,.9)"></div>
<div class="a" style="left:1018px;top:895px;width:3px;height:1px;background:rgba(205,232,236,.9)"></div>
<div class="a" style="left:1018px;top:899px;width:3px;height:1px;background:rgba(205,232,236,.9)"></div>
<div class="a" style="left:1019px;top:903px;width:2px;height:1px;background:rgba(205,232,236,.9)"></div>
<div class="a" style="left:1019px;top:907px;width:2px;height:1px;background:rgba(205,232,236,.9)"></div>
<div class="a" style="left:1020px;top:911px;width:1px;height:1px;background:rgba(205,232,236,.9)"></div>
<div class="a" style="left:1389px;top:843px;width:6px;height:1px;background:rgba(205,232,236,.85)"></div>
<div class="a" style="left:1389px;top:849px;width:2px;height:1px;background:rgba(205,232,236,.85)"></div>
<div class="a" style="left:1389px;top:855px;width:6px;height:1px;background:rgba(205,232,236,.85)"></div>
<div class="a" style="left:1389px;top:862px;width:2px;height:1px;background:rgba(205,232,236,.85)"></div>
<div class="a" style="left:1389px;top:868px;width:6px;height:1px;background:rgba(205,232,236,.85)"></div>
<div class="a" style="left:1389px;top:874px;width:2px;height:1px;background:rgba(205,232,236,.85)"></div>
<div class="a" style="left:1389px;top:880px;width:6px;height:1px;background:rgba(205,232,236,.85)"></div>
<div class="a" style="left:1389px;top:886px;width:2px;height:1px;background:rgba(205,232,236,.85)"></div>
<div class="a" style="left:1389px;top:892px;width:6px;height:1px;background:rgba(205,232,236,.85)"></div>
<div class="a" style="left:1389px;top:899px;width:2px;height:1px;background:rgba(205,232,236,.85)"></div>
<div class="a" style="left:1389px;top:905px;width:6px;height:1px;background:rgba(205,232,236,.85)"></div>
<div class="a" style="left:1389px;top:911px;width:2px;height:1px;background:rgba(205,232,236,.85)"></div>
<div class="gline" style="top:843px"></div>
<div class="gline" style="top:857px"></div>
<div class="gline" style="top:870px"></div>
<div class="gline" style="top:884px"></div>
<div class="gline" style="top:897px"></div>
<div class="gline" style="top:911px"></div>
<div class="gc" style="left:999px;top:636px">Front</div>
<div class="bal" style="left:1038px;top:657px"></div>
<div class="a" style="left:1038px;top:661px;width:1px;height:4px;background:#e6f4f4"></div><div class="a" style="left:1080px;top:661px;width:1px;height:4px;background:#e6f4f4"></div>
<div class="balt" style="left:1056px;top:658px"></div>
<div class="vtr" style="left:1058px;top:674px;height:69px"></div>
<div class="vth" style="left:1055px;top:673px"></div>
<div class="gc" style="left:1100px;top:636px">Rear</div>
<div class="bal" style="left:1139px;top:657px"></div>
<div class="a" style="left:1139px;top:661px;width:1px;height:4px;background:#e6f4f4"></div><div class="a" style="left:1181px;top:661px;width:1px;height:4px;background:#e6f4f4"></div>
<div class="balt" style="left:1157px;top:658px"></div>
<div class="vtr" style="left:1159px;top:674px;height:69px"></div>
<div class="vth" style="left:1156px;top:673px"></div>
<div class="gc" style="left:1201px;top:636px">Subwoofer</div>
<div class="vtr" style="left:1260px;top:674px;height:69px"></div>
<div class="vth" style="left:1257px;top:673px"></div>
<div class="gc" style="left:1302px;top:636px">Center</div>
<div class="vtr" style="left:1361px;top:674px;height:69px"></div>
<div class="vth" style="left:1358px;top:673px"></div>
<div class="gc" style="left:999px;top:805px">Микрофон</div>
<div class="bal" style="left:1038px;top:826px"></div>
<div class="a" style="left:1038px;top:830px;width:1px;height:4px;background:#e6f4f4"></div><div class="a" style="left:1080px;top:830px;width:1px;height:4px;background:#e6f4f4"></div>
<div class="balt" style="left:1056px;top:827px"></div>
<div class="vtr" style="left:1058px;top:843px;height:69px"></div>
<div class="vth" style="left:1055px;top:903px"></div>
<div class="gc" style="left:1100px;top:805px">Громк. лин.вх.</div>
<div class="bal" style="left:1139px;top:826px"></div>
<div class="a" style="left:1139px;top:830px;width:1px;height:4px;background:#e6f4f4"></div><div class="a" style="left:1181px;top:830px;width:1px;height:4px;background:#e6f4f4"></div>
<div class="balt" style="left:1157px;top:827px"></div>
<div class="vtr" style="left:1159px;top:843px;height:69px"></div>
<div class="vth" style="left:1156px;top:842px"></div>
<div class="gc" style="left:1201px;top:805px">Стерео микшер</div>
<div class="bal" style="left:1240px;top:826px"></div>
<div class="a" style="left:1240px;top:830px;width:1px;height:4px;background:#e6f4f4"></div><div class="a" style="left:1282px;top:830px;width:1px;height:4px;background:#e6f4f4"></div>
<div class="balt" style="left:1258px;top:827px"></div>
<div class="vtr" style="left:1260px;top:843px;height:69px"></div>
<div class="vth" style="left:1257px;top:903px"></div>
<div class="led" style="left:1053px;top:931px;background:radial-gradient(circle at 40% 35%,#8a8a8a,#6a6a6a 60%,#555)"></div>
<div class="led" style="left:1154px;top:931px;background:radial-gradient(circle at 40% 35%,#e4f29a,#c4dc6a 60%,#9ab84a)"></div>
<div class="led" style="left:1255px;top:931px;background:radial-gradient(circle at 40% 35%,#8a8a8a,#6a6a6a 60%,#555)"></div>
<div class="a" style="left:876px;top:977px;width:24px;height:14px;border-radius:5px;background:linear-gradient(180deg,#86dcc8,#45b29c);box-shadow:0 0 0 1px rgba(150,220,210,.6)"></div>
<div class="gw" style="left:884px;top:972px;font-family:'Liberation Serif',serif;font-weight:bold;font-size:17px;line-height:17px">i</div>
<div class="a" style="left:1373px;top:973px;width:74px;height:20px;border-radius:9px;background:linear-gradient(180deg,#6ab4c0 0,#3f8a98 4px,#2f7a88 12px);box-shadow:0 0 0 1px #b8e8ec,0 0 0 2px #3a7f8e"></div>
<div class="gw" style="left:1373px;top:977px;width:74px;text-align:center;font-size:13px;line-height:14px">OK</div>
</body></html>
